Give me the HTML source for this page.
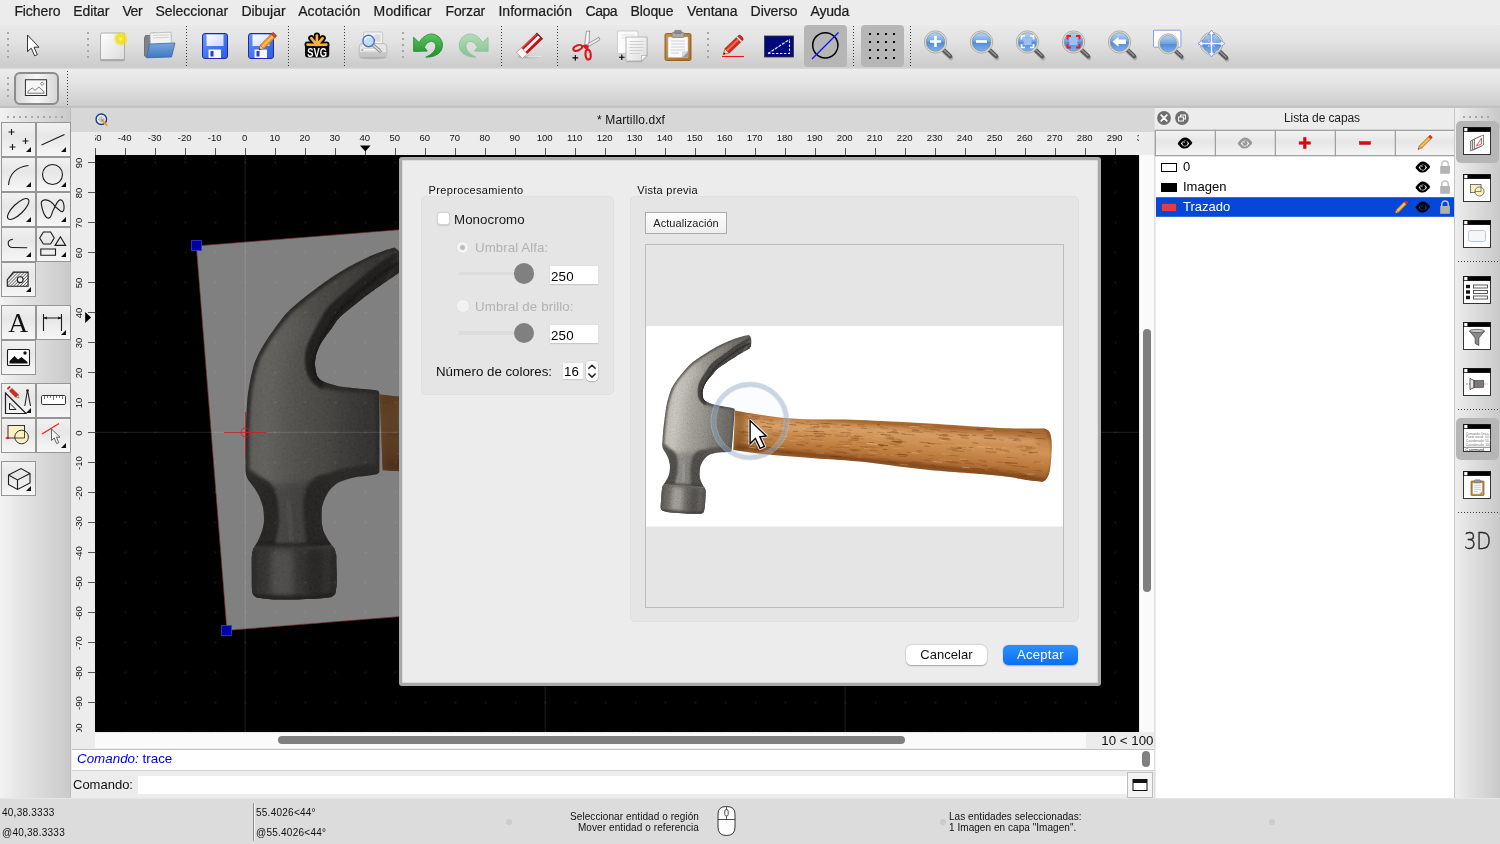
<!DOCTYPE html>
<html lang="es">
<head>
<meta charset="utf-8">
<title>Martillo.dxf</title>
<style>
*{box-sizing:border-box;margin:0;padding:0}
html,body{width:1500px;height:844px;overflow:hidden;background:#ececec;font-family:"Liberation Sans",sans-serif;color:#000}
.abs{position:absolute}
#root{position:absolute;left:0;top:0;width:1500px;height:844px;overflow:hidden;will-change:transform}
#menubar{left:0;top:0;width:1500px;height:24px;background:#ececec}
#menubar span{position:absolute;top:2px;font-size:14px;line-height:18px;color:#1c1c1c;white-space:nowrap;-webkit-text-stroke:0.22px #1c1c1c}
#tb1{left:0;top:24px;width:1500px;height:45px;background:linear-gradient(#f4f4f4 0px,#e9e9e9 1px,#e2e2e2 18px,#cbcbcb 43px,#d6d6d6 44px,#dadada 45px)}
#tb2{left:0;top:69px;width:1500px;height:39px;background:linear-gradient(#ececec 0px,#e4e4e4 14px,#cecece 36px,#c8c8c8 37px,#b9b9b9 38px,#c4c4c4 39px)}
.vsep{position:absolute;width:1px;background:repeating-linear-gradient(#3a3a3a 0,#3a3a3a 1px,transparent 1px,transparent 3px)}
.grip{position:absolute;width:2px;background:repeating-linear-gradient(#a6a6a6 0,#a6a6a6 2px,transparent 2px,transparent 6px)}
.hgrip{position:absolute;height:2px;background:repeating-linear-gradient(90deg,#a6a6a6 0,#a6a6a6 2px,transparent 2px,transparent 6px)}
#lefttb{left:0;top:108px;width:71px;height:690px;background:linear-gradient(90deg,#f2f2f2 0%,#e4e4e4 30%,#cacaca 98%,#b4b4b4 100%)}
.lb{position:absolute;width:33px;height:33px;box-shadow:0 0 0 1px #969696;background:linear-gradient(#f1f1f1 0%,#e7e7e7 40%,#f0f0f0 75%,#f6f6f6 100%)}
.lb svg{position:absolute;left:0;top:0}
.lb:after{content:"";position:absolute;right:3.9px;bottom:3.6px;border-left:5.3px solid transparent;border-bottom:5.3px solid #111}
.lb.na:after{display:none}
</style>
</head>
<body>
<div id="root">
<svg width="0" height="0" style="position:absolute"><defs>
<linearGradient id="hFace" gradientUnits="userSpaceOnUse" x1="16" y1="0" x2="92" y2="8"><stop offset="0" stop-color="#908d86"/><stop offset="0.1" stop-color="#b4b1a9"/><stop offset="0.3" stop-color="#c6c3bb"/><stop offset="0.52" stop-color="#a29f97"/><stop offset="0.76" stop-color="#85827b"/><stop offset="1" stop-color="#68655f"/></linearGradient>
<linearGradient id="hWood" gradientUnits="userSpaceOnUse" x1="240" y1="96" x2="236" y2="140"><stop offset="0" stop-color="#b0723a"/><stop offset="0.12" stop-color="#c6864a"/><stop offset="0.38" stop-color="#d09456"/><stop offset="0.7" stop-color="#bc7a3c"/><stop offset="1" stop-color="#965a28"/></linearGradient>
<filter id="hNoise" x="0" y="0" width="100%" height="100%"><feTurbulence type="fractalNoise" baseFrequency="0.8" numOctaves="2" seed="4" result="n"/><feColorMatrix in="n" type="matrix" values="1.4 0 0 0 -0.25  1.4 0 0 0 -0.25  1.4 0 0 0 -0.25  0 0 0 0 0.12"/></filter>
<filter id="hb05" x="-20%" y="-20%" width="140%" height="140%"><feGaussianBlur stdDeviation="0.45"/></filter>
<filter id="hb07" x="-20%" y="-20%" width="140%" height="140%"><feGaussianBlur stdDeviation="0.8"/></filter>
<filter id="hb1" x="-20%" y="-20%" width="140%" height="140%"><feGaussianBlur stdDeviation="1.1"/></filter>
<filter id="hb2" x="-20%" y="-20%" width="140%" height="140%"><feGaussianBlur stdDeviation="2"/></filter>
<filter id="hb4" x="-30%" y="-30%" width="160%" height="160%"><feGaussianBlur stdDeviation="3.5"/></filter>
<clipPath id="hHeadClip"><path d="M102.7 9.0 C101.8 9.2 99.3 9.6 97.1 10.2 C94.9 10.8 92.0 11.6 89.5 12.5 C86.9 13.5 84.3 14.5 81.8 15.6 C79.2 16.7 76.7 17.8 74.1 19.1 C71.5 20.4 69.8 21.3 66.4 23.3 C62.9 25.4 57.3 28.9 53.7 31.3 C50.0 33.8 47.2 35.8 44.6 38.0 C42.0 40.3 40.2 42.6 38.1 44.9 C36.1 47.3 34.1 49.5 32.2 52.2 C30.2 54.8 27.9 58.2 26.5 60.8 C25.0 63.4 24.6 65.0 23.7 67.6 C22.8 70.3 21.7 74.3 21.1 76.8 C20.5 79.4 20.3 80.6 19.9 83.0 C19.6 85.4 19.1 88.7 18.8 91.1 C18.5 93.5 18.3 95.2 18.0 97.4 C17.7 99.7 17.5 101.9 17.2 104.5 C17.0 107.1 16.7 110.6 16.6 113.0 C16.4 115.4 16.3 117.9 16.2 118.8 C16.3 119.5 16.3 121.1 16.9 122.6 C17.5 124.1 19.1 126.1 20.0 127.7 C20.9 129.3 21.7 130.8 22.3 132.3 C22.8 133.8 23.1 135.2 23.4 136.5 C23.7 137.7 23.9 138.0 23.9 139.6 C24.0 141.2 23.9 144.2 23.6 146.1 C23.3 148.0 22.7 149.4 22.1 151.0 C21.4 152.5 20.5 154.2 19.7 155.6 C18.9 156.9 17.6 158.5 17.2 159.1 C17.0 159.5 16.4 161.0 16.2 162.0 C16.0 163.0 16.0 163.2 15.8 165.1 C15.6 166.9 15.4 170.2 15.2 172.8 C15.0 175.5 14.7 179.1 14.7 180.9 C14.7 182.7 15.0 182.9 15.5 183.5 C15.9 184.2 17.0 184.7 17.4 184.9 C18.7 185.1 21.6 186.0 25.4 186.4 C29.2 186.8 35.5 187.2 40.2 187.4 C44.8 187.7 50.4 187.8 53.1 187.7 C55.7 187.7 55.4 187.5 56.1 187.2 C56.9 186.9 57.4 186.1 57.7 185.9 C57.9 185.0 58.6 182.8 58.8 180.7 C59.1 178.7 59.2 175.8 59.3 173.7 C59.4 171.7 59.5 169.9 59.6 168.5 C59.7 167.2 59.8 166.4 59.7 165.4 C59.6 164.4 59.1 162.9 59.0 162.4 C58.6 161.7 57.3 160.0 56.5 158.5 C55.8 157.0 54.8 155.2 54.3 153.5 C53.8 151.9 53.7 150.4 53.6 148.5 C53.6 146.6 53.9 143.6 54.1 142.0 C54.3 140.4 54.6 139.8 54.9 139.0 C55.2 138.1 55.4 137.7 55.8 136.9 C56.2 136.2 56.4 135.6 57.1 134.7 C57.8 133.7 58.8 132.2 60.0 131.2 C61.1 130.2 62.3 129.2 63.9 128.5 C65.5 127.8 67.7 127.3 69.6 126.9 C71.5 126.6 73.0 126.5 75.2 126.3 C77.4 126.1 81.0 126.1 82.6 125.9 C84.2 125.8 84.3 125.6 84.8 125.4 C85.3 125.1 85.5 124.5 85.6 124.4 C85.9 120.8 86.8 109.6 87.3 103.0 C87.9 96.3 88.5 87.4 88.8 84.3 C88.7 84.1 88.7 83.3 88.5 82.9 C88.2 82.6 88.2 82.5 87.2 82.2 C86.2 81.9 84.5 81.7 82.5 81.3 C80.5 81.0 77.6 80.5 75.1 80.1 C72.7 79.6 70.3 79.3 67.8 78.6 C65.4 77.8 62.3 76.6 60.7 75.8 C59.0 75.0 58.5 74.3 57.9 73.5 C57.2 72.7 57.1 72.0 56.9 70.8 C56.7 69.6 56.6 67.6 56.6 66.2 C56.7 64.8 57.0 63.7 57.3 62.5 C57.6 61.3 58.0 60.3 58.7 59.0 C59.3 57.6 60.0 56.3 61.4 54.5 C62.7 52.7 65.1 50.2 66.8 48.3 C68.5 46.3 69.2 44.8 71.5 42.8 C73.9 40.8 77.8 38.3 80.9 36.2 C84.0 34.1 88.1 31.5 90.3 30.2 C92.4 28.8 92.2 29.0 93.8 28.1 C95.3 27.2 97.9 25.8 99.6 24.8 C101.3 23.9 103.2 22.7 103.9 22.3 C104.0 21.9 104.7 21.1 104.9 20.1 C105.1 19.1 105.2 17.7 105.3 16.5 C105.3 15.3 105.3 14.0 105.2 13.0 C105.1 12.0 104.5 11.0 104.4 10.6 Z"/></clipPath>
<clipPath id="hHandleClip"><path d="M88.9 84.6 C91.8 85.1 98.6 86.5 106.0 87.6 C113.4 88.7 123.0 90.4 133.4 91.4 C143.8 92.4 154.8 93.0 168.2 93.4 C181.6 93.8 195.6 93.3 214.0 94.0 C232.4 94.7 255.5 96.0 278.7 97.3 C301.9 98.6 335.6 101.2 353.3 102.0 C371.0 102.8 377.5 102.3 385.0 102.4 C392.5 102.5 396.2 102.6 398.5 102.6 C399.3 103.2 402.3 103.8 403.5 106.0 C404.7 108.2 405.3 111.7 405.6 116.0 C405.9 120.3 405.6 127.0 405.2 132.0 C404.8 137.0 404.4 142.4 403.5 146.0 C402.6 149.6 401.2 151.9 400.0 153.5 C398.8 155.1 397.1 155.4 396.5 155.8 C393.8 155.5 387.2 155.0 380.0 154.0 C372.8 153.0 370.2 151.5 353.3 149.8 C336.4 148.1 301.9 146.0 278.7 143.6 C255.5 141.2 232.4 137.5 214.0 135.6 C195.6 133.7 184.1 133.4 168.2 132.2 C152.3 131.0 132.0 129.6 118.5 128.2 C105.0 126.8 92.5 124.7 87.3 124.0 Z"/></clipPath>
<g id="hammer">
 <rect x="0" y="0" width="417" height="200.5" fill="#fff"/>
 <path d="M88.9 84.6 C91.8 85.1 98.6 86.5 106.0 87.6 C113.4 88.7 123.0 90.4 133.4 91.4 C143.8 92.4 154.8 93.0 168.2 93.4 C181.6 93.8 195.6 93.3 214.0 94.0 C232.4 94.7 255.5 96.0 278.7 97.3 C301.9 98.6 335.6 101.2 353.3 102.0 C371.0 102.8 377.5 102.3 385.0 102.4 C392.5 102.5 396.2 102.6 398.5 102.6 C399.3 103.2 402.3 103.8 403.5 106.0 C404.7 108.2 405.3 111.7 405.6 116.0 C405.9 120.3 405.6 127.0 405.2 132.0 C404.8 137.0 404.4 142.4 403.5 146.0 C402.6 149.6 401.2 151.9 400.0 153.5 C398.8 155.1 397.1 155.4 396.5 155.8 C393.8 155.5 387.2 155.0 380.0 154.0 C372.8 153.0 370.2 151.5 353.3 149.8 C336.4 148.1 301.9 146.0 278.7 143.6 C255.5 141.2 232.4 137.5 214.0 135.6 C195.6 133.7 184.1 133.4 168.2 132.2 C152.3 131.0 132.0 129.6 118.5 128.2 C105.0 126.8 92.5 124.7 87.3 124.0 Z" fill="url(#hWood)"/>
 <g clip-path="url(#hHandleClip)">
  <path d="M88 84 L99 86 L99 128 L87 125 Z" fill="#4a240a" fill-opacity="0.35" filter="url(#hb2)"/>
  <path d="M90 86.6 L214 96 L353 104 L398 104" stroke="#8a4614" stroke-opacity="0.45" stroke-width="2.5" fill="none" filter="url(#hb1)"/>
  <path d="M90 121 L214 133.5 L353 147.5 L398 154" stroke="#6e3410" stroke-opacity="0.55" stroke-width="4" fill="none" filter="url(#hb1)"/>
  <path d="M110 98 L214 104 L300 110 L390 116" stroke="#e6b888" stroke-opacity="0.45" stroke-width="6" fill="none" filter="url(#hb2)"/>
  <path d="M188.4 101.1 l9.5 0.2" stroke="#8a5020" stroke-opacity="0.33" stroke-width="0.8"/><path d="M366.6 114.3 l3.9 0.1" stroke="#7a441c" stroke-opacity="0.45" stroke-width="0.7"/><path d="M341.4 108.9 l5.2 0.4" stroke="#6e3a14" stroke-opacity="0.52" stroke-width="0.7"/><path d="M386.8 107.2 l11.6 0.7" stroke="#7a441c" stroke-opacity="0.40" stroke-width="0.8"/><path d="M260.3 126.2 l4.0 0.3" stroke="#7a441c" stroke-opacity="0.50" stroke-width="0.8"/><path d="M109.1 92.1 l5.1 0.8" stroke="#7a441c" stroke-opacity="0.54" stroke-width="0.7"/><path d="M370.7 121.1 l5.5 0.2" stroke="#7a441c" stroke-opacity="0.36" stroke-width="0.7"/><path d="M240.5 111.0 l7.5 0.4" stroke="#6e3a14" stroke-opacity="0.51" stroke-width="0.7"/><path d="M320.2 108.7 l7.9 0.3" stroke="#e8bc88" stroke-opacity="0.31" stroke-width="0.8"/><path d="M329.9 137.8 l6.4 0.5" stroke="#7a441c" stroke-opacity="0.42" stroke-width="0.7"/><path d="M345.4 144.4 l7.7 0.7" stroke="#6e3a14" stroke-opacity="0.53" stroke-width="0.7"/><path d="M265.7 126.7 l7.5 0.6" stroke="#e8bc88" stroke-opacity="0.55" stroke-width="1.0"/><path d="M198.1 118.2 l7.9 0.1" stroke="#643010" stroke-opacity="0.38" stroke-width="0.6"/><path d="M208.8 128.4 l3.8 0.1" stroke="#8a5020" stroke-opacity="0.46" stroke-width="0.6"/><path d="M220.9 117.3 l10.1 1.1" stroke="#e8bc88" stroke-opacity="0.65" stroke-width="1.0"/><path d="M135.9 99.5 l5.3 0.6" stroke="#7a441c" stroke-opacity="0.38" stroke-width="0.6"/><path d="M175.7 100.6 l8.3 0.6" stroke="#643010" stroke-opacity="0.51" stroke-width="0.8"/><path d="M246.7 122.3 l9.8 1.0" stroke="#e8bc88" stroke-opacity="0.32" stroke-width="0.7"/><path d="M211.3 99.9 l9.3 1.0" stroke="#6e3a14" stroke-opacity="0.32" stroke-width="0.7"/><path d="M123.4 112.8 l4.0 0.2" stroke="#8a5020" stroke-opacity="0.50" stroke-width="0.7"/><path d="M97.8 119.0 l9.1 1.7" stroke="#643010" stroke-opacity="0.35" stroke-width="0.8"/><path d="M234.1 101.7 l7.9 0.7" stroke="#7a441c" stroke-opacity="0.64" stroke-width="0.5"/><path d="M121.1 103.6 l5.6 0.6" stroke="#7a441c" stroke-opacity="0.59" stroke-width="0.6"/><path d="M379.4 121.7 l9.9 0.5" stroke="#8a5020" stroke-opacity="0.62" stroke-width="0.8"/><path d="M117.7 120.7 l8.2 1.1" stroke="#643010" stroke-opacity="0.62" stroke-width="0.8"/><path d="M326.8 116.7 l5.2 0.6" stroke="#7a441c" stroke-opacity="0.58" stroke-width="0.9"/><path d="M314.9 111.5 l8.2 0.9" stroke="#6e3a14" stroke-opacity="0.42" stroke-width="0.9"/><path d="M233.6 104.6 l9.1 1.1" stroke="#e8bc88" stroke-opacity="0.42" stroke-width="1.0"/><path d="M200.8 104.0 l5.3 0.2" stroke="#7a441c" stroke-opacity="0.37" stroke-width="1.0"/><path d="M275.5 99.5 l12.1 0.7" stroke="#e8bc88" stroke-opacity="0.42" stroke-width="0.8"/><path d="M366.6 139.7 l10.5 0.9" stroke="#7a441c" stroke-opacity="0.47" stroke-width="0.8"/><path d="M116.4 124.1 l10.2 1.4" stroke="#e8bc88" stroke-opacity="0.46" stroke-width="0.9"/><path d="M141.7 98.2 l4.5 0.1" stroke="#e8bc88" stroke-opacity="0.62" stroke-width="0.9"/><path d="M388.0 136.1 l6.5 0.1" stroke="#7a441c" stroke-opacity="0.49" stroke-width="0.9"/><path d="M310.8 106.0 l10.5 1.0" stroke="#7a441c" stroke-opacity="0.35" stroke-width="0.6"/><path d="M166.6 105.5 l5.4 0.3" stroke="#643010" stroke-opacity="0.51" stroke-width="0.9"/><path d="M108.5 115.8 l12.0 1.6" stroke="#8a5020" stroke-opacity="0.53" stroke-width="1.0"/><path d="M242.5 118.5 l8.2 0.9" stroke="#7a441c" stroke-opacity="0.31" stroke-width="0.8"/><path d="M325.9 109.0 l4.4 0.4" stroke="#6e3a14" stroke-opacity="0.52" stroke-width="0.7"/><path d="M247.6 119.9 l10.8 0.7" stroke="#8a5020" stroke-opacity="0.34" stroke-width="0.6"/><path d="M102.8 92.4 l7.5 1.0" stroke="#6e3a14" stroke-opacity="0.31" stroke-width="0.8"/><path d="M243.7 117.9 l9.9 1.1" stroke="#8a5020" stroke-opacity="0.46" stroke-width="0.8"/><path d="M165.3 113.4 l11.8 0.8" stroke="#8a5020" stroke-opacity="0.62" stroke-width="0.6"/><path d="M226.0 112.7 l6.9 0.4" stroke="#e8bc88" stroke-opacity="0.41" stroke-width="0.5"/><path d="M293.5 133.4 l12.0 1.0" stroke="#e8bc88" stroke-opacity="0.35" stroke-width="0.7"/><path d="M166.9 100.1 l7.7 0.3" stroke="#6e3a14" stroke-opacity="0.56" stroke-width="0.7"/><path d="M390.9 144.6 l4.6 0.1" stroke="#8a5020" stroke-opacity="0.45" stroke-width="0.7"/><path d="M198.4 99.2 l6.7 0.3" stroke="#7a441c" stroke-opacity="0.42" stroke-width="0.5"/><path d="M190.8 118.3 l8.1 0.6" stroke="#7a441c" stroke-opacity="0.32" stroke-width="0.6"/><path d="M170.7 96.8 l10.8 0.7" stroke="#7a441c" stroke-opacity="0.39" stroke-width="0.9"/><path d="M295.5 140.4 l7.1 0.6" stroke="#8a5020" stroke-opacity="0.49" stroke-width="0.9"/><path d="M117.2 93.1 l9.9 1.0" stroke="#6e3a14" stroke-opacity="0.45" stroke-width="0.5"/><path d="M116.9 100.2 l9.1 1.3" stroke="#643010" stroke-opacity="0.38" stroke-width="0.7"/><path d="M193.1 115.8 l12.3 0.3" stroke="#7a441c" stroke-opacity="0.39" stroke-width="0.9"/><path d="M375.2 149.3 l5.6 0.5" stroke="#643010" stroke-opacity="0.36" stroke-width="0.8"/><path d="M152.6 109.8 l9.7 1.0" stroke="#6e3a14" stroke-opacity="0.39" stroke-width="0.5"/><path d="M95.6 105.6 l12.8 2.2" stroke="#7a441c" stroke-opacity="0.48" stroke-width="0.6"/><path d="M339.0 122.0 l8.0 0.9" stroke="#7a441c" stroke-opacity="0.59" stroke-width="0.7"/><path d="M155.4 102.5 l5.0 0.4" stroke="#e8bc88" stroke-opacity="0.61" stroke-width="0.7"/><path d="M195.7 97.8 l4.3 0.4" stroke="#e8bc88" stroke-opacity="0.32" stroke-width="0.7"/><path d="M106.8 113.0 l6.8 1.0" stroke="#643010" stroke-opacity="0.48" stroke-width="0.8"/><path d="M103.8 95.7 l5.7 1.1" stroke="#643010" stroke-opacity="0.30" stroke-width="1.0"/><path d="M256.3 108.2 l12.7 0.9" stroke="#643010" stroke-opacity="0.41" stroke-width="0.7"/><path d="M115.5 100.6 l9.6 0.9" stroke="#6e3a14" stroke-opacity="0.39" stroke-width="0.9"/><path d="M133.7 113.4 l6.9 0.3" stroke="#e8bc88" stroke-opacity="0.40" stroke-width="0.8"/><path d="M250.9 128.0 l9.6 0.8" stroke="#8a5020" stroke-opacity="0.55" stroke-width="0.7"/><path d="M389.4 112.2 l10.2 0.7" stroke="#6e3a14" stroke-opacity="0.53" stroke-width="0.9"/><path d="M245.9 114.8 l10.0 1.0" stroke="#8a5020" stroke-opacity="0.48" stroke-width="0.8"/><path d="M337.1 104.0 l9.9 0.8" stroke="#e8bc88" stroke-opacity="0.58" stroke-width="0.8"/><path d="M159.9 95.9 l4.3 0.2" stroke="#6e3a14" stroke-opacity="0.43" stroke-width="0.7"/><path d="M105.4 90.1 l8.3 0.8" stroke="#643010" stroke-opacity="0.39" stroke-width="0.9"/><path d="M317.5 123.4 l8.4 0.8" stroke="#6e3a14" stroke-opacity="0.53" stroke-width="0.7"/><path d="M336.0 139.4 l5.3 0.5" stroke="#7a441c" stroke-opacity="0.56" stroke-width="1.0"/><path d="M240.2 112.5 l7.8 0.8" stroke="#6e3a14" stroke-opacity="0.54" stroke-width="0.8"/><path d="M113.6 95.8 l5.5 0.8" stroke="#643010" stroke-opacity="0.56" stroke-width="0.6"/><path d="M236.7 116.2 l12.7 1.2" stroke="#7a441c" stroke-opacity="0.33" stroke-width="0.6"/><path d="M247.0 116.3 l7.7 0.5" stroke="#8a5020" stroke-opacity="0.34" stroke-width="1.0"/><path d="M374.6 105.6 l7.6 0.9" stroke="#7a441c" stroke-opacity="0.59" stroke-width="0.7"/><path d="M368.6 146.6 l3.7 0.3" stroke="#e8bc88" stroke-opacity="0.33" stroke-width="1.0"/><path d="M130.3 121.1 l8.1 0.6" stroke="#e8bc88" stroke-opacity="0.61" stroke-width="0.7"/><path d="M356.3 121.6 l4.6 0.4" stroke="#e8bc88" stroke-opacity="0.63" stroke-width="0.7"/><path d="M132.8 105.0 l6.2 0.3" stroke="#6e3a14" stroke-opacity="0.59" stroke-width="0.7"/><path d="M211.1 131.1 l5.0 0.2" stroke="#e8bc88" stroke-opacity="0.30" stroke-width="0.7"/><path d="M209.4 133.2 l8.9 0.8" stroke="#7a441c" stroke-opacity="0.43" stroke-width="0.9"/><path d="M175.3 97.3 l9.6 0.3" stroke="#7a441c" stroke-opacity="0.52" stroke-width="0.6"/><path d="M245.3 105.3 l6.7 0.8" stroke="#6e3a14" stroke-opacity="0.63" stroke-width="0.8"/><path d="M367.7 146.9 l8.5 1.0" stroke="#6e3a14" stroke-opacity="0.55" stroke-width="0.7"/><path d="M276.9 105.3 l11.7 0.7" stroke="#8a5020" stroke-opacity="0.47" stroke-width="0.7"/><path d="M194.5 106.6 l10.4 0.4" stroke="#643010" stroke-opacity="0.64" stroke-width="0.6"/><path d="M236.9 123.4 l4.2 0.2" stroke="#6e3a14" stroke-opacity="0.53" stroke-width="1.0"/><path d="M241.1 106.2 l12.1 1.0" stroke="#7a441c" stroke-opacity="0.65" stroke-width="0.8"/><path d="M164.2 101.2 l8.6 0.3" stroke="#643010" stroke-opacity="0.41" stroke-width="0.8"/><path d="M359.7 137.4 l7.1 0.4" stroke="#8a5020" stroke-opacity="0.44" stroke-width="0.6"/><path d="M318.6 123.3 l8.7 0.6" stroke="#e8bc88" stroke-opacity="0.43" stroke-width="0.8"/><path d="M352.3 113.6 l5.7 0.6" stroke="#7a441c" stroke-opacity="0.39" stroke-width="0.7"/><path d="M184.9 124.8 l12.7 0.7" stroke="#7a441c" stroke-opacity="0.34" stroke-width="0.9"/><path d="M233.9 119.9 l3.0 0.5" stroke="#8a5020" stroke-opacity="0.44" stroke-width="1.0"/><path d="M165.5 99.0 l4.5 -0.0" stroke="#e8bc88" stroke-opacity="0.48" stroke-width="0.9"/><path d="M303.1 136.8 l11.9 0.6" stroke="#6e3a14" stroke-opacity="0.33" stroke-width="0.6"/><path d="M263.1 100.3 l10.2 0.7" stroke="#e8bc88" stroke-opacity="0.64" stroke-width="0.8"/><path d="M302.4 105.9 l3.7 0.1" stroke="#8a5020" stroke-opacity="0.48" stroke-width="0.6"/><path d="M330.3 103.0 l8.4 0.9" stroke="#643010" stroke-opacity="0.65" stroke-width="0.8"/><path d="M358.7 125.3 l5.3 0.6" stroke="#7a441c" stroke-opacity="0.39" stroke-width="0.7"/><path d="M96.6 105.5 l9.7 1.3" stroke="#643010" stroke-opacity="0.45" stroke-width="0.7"/><path d="M202.5 114.0 l10.0 0.5" stroke="#643010" stroke-opacity="0.55" stroke-width="0.6"/><path d="M332.3 134.6 l8.0 0.5" stroke="#7a441c" stroke-opacity="0.37" stroke-width="0.9"/><path d="M160.2 102.6 l10.6 0.7" stroke="#8a5020" stroke-opacity="0.40" stroke-width="0.6"/><path d="M157.9 109.2 l9.7 0.9" stroke="#7a441c" stroke-opacity="0.63" stroke-width="0.5"/><path d="M97.2 109.1 l7.2 1.0" stroke="#7a441c" stroke-opacity="0.55" stroke-width="0.9"/><path d="M358.6 136.5 l13.0 0.9" stroke="#643010" stroke-opacity="0.63" stroke-width="0.8"/><path d="M249.5 116.6 l6.1 0.8" stroke="#643010" stroke-opacity="0.55" stroke-width="0.7"/><path d="M123.1 94.6 l3.8 0.5" stroke="#6e3a14" stroke-opacity="0.45" stroke-width="0.9"/><path d="M205.6 124.4 l6.1 0.0" stroke="#6e3a14" stroke-opacity="0.58" stroke-width="0.7"/><path d="M203.3 129.8 l4.9 -0.1" stroke="#7a441c" stroke-opacity="0.43" stroke-width="0.7"/><path d="M336.8 136.1 l3.4 0.4" stroke="#6e3a14" stroke-opacity="0.31" stroke-width="0.5"/><path d="M149.3 96.4 l9.1 0.9" stroke="#643010" stroke-opacity="0.43" stroke-width="0.8"/><path d="M169.7 120.4 l6.2 0.4" stroke="#6e3a14" stroke-opacity="0.40" stroke-width="0.8"/><path d="M334.9 143.6 l3.7 0.3" stroke="#6e3a14" stroke-opacity="0.59" stroke-width="1.0"/><path d="M380.0 122.9 l5.5 0.1" stroke="#7a441c" stroke-opacity="0.45" stroke-width="0.7"/><path d="M92.6 120.3 l6.0 1.0" stroke="#7a441c" stroke-opacity="0.54" stroke-width="0.7"/><path d="M187.1 108.7 l10.8 0.4" stroke="#7a441c" stroke-opacity="0.33" stroke-width="0.6"/><path d="M214.0 120.4 l7.8 1.0" stroke="#7a441c" stroke-opacity="0.49" stroke-width="0.9"/><path d="M390.3 117.7 l3.8 0.4" stroke="#7a441c" stroke-opacity="0.33" stroke-width="1.0"/><path d="M142.7 98.4 l7.6 0.7" stroke="#7a441c" stroke-opacity="0.61" stroke-width="0.9"/><path d="M292.0 105.5 l11.4 0.7" stroke="#8a5020" stroke-opacity="0.40" stroke-width="0.6"/><path d="M169.1 110.7 l4.9 0.4" stroke="#643010" stroke-opacity="0.38" stroke-width="0.8"/><path d="M189.2 110.0 l12.9 0.7" stroke="#7a441c" stroke-opacity="0.48" stroke-width="0.6"/><path d="M231.0 98.4 l3.0 0.5" stroke="#7a441c" stroke-opacity="0.61" stroke-width="1.0"/><path d="M102.3 99.2 l4.2 0.4" stroke="#8a5020" stroke-opacity="0.37" stroke-width="0.5"/><path d="M245.9 104.8 l9.0 1.1" stroke="#e8bc88" stroke-opacity="0.57" stroke-width="0.6"/><path d="M271.2 124.7 l5.2 0.2" stroke="#7a441c" stroke-opacity="0.43" stroke-width="1.0"/><path d="M101.6 114.6 l12.1 1.7" stroke="#643010" stroke-opacity="0.59" stroke-width="0.7"/><path d="M278.8 102.9 l3.3 -0.0" stroke="#7a441c" stroke-opacity="0.47" stroke-width="0.6"/><path d="M210.2 116.5 l9.4 0.6" stroke="#7a441c" stroke-opacity="0.33" stroke-width="0.6"/><path d="M390.4 136.8 l7.2 0.3" stroke="#e8bc88" stroke-opacity="0.32" stroke-width="0.7"/><path d="M216.6 128.7 l13.0 1.1" stroke="#7a441c" stroke-opacity="0.43" stroke-width="0.7"/><path d="M376.4 124.8 l4.6 0.3" stroke="#6e3a14" stroke-opacity="0.34" stroke-width="0.9"/><path d="M230.1 103.2 l3.1 0.5" stroke="#e8bc88" stroke-opacity="0.49" stroke-width="0.7"/><path d="M264.2 136.6 l10.4 0.8" stroke="#643010" stroke-opacity="0.36" stroke-width="0.8"/><path d="M371.4 109.7 l7.9 0.5" stroke="#7a441c" stroke-opacity="0.58" stroke-width="0.9"/><path d="M103.2 121.1 l6.1 0.8" stroke="#e8bc88" stroke-opacity="0.51" stroke-width="1.0"/><path d="M278.6 134.0 l4.6 0.4" stroke="#7a441c" stroke-opacity="0.58" stroke-width="0.8"/><path d="M149.6 110.6 l8.7 0.4" stroke="#8a5020" stroke-opacity="0.31" stroke-width="0.7"/><path d="M135.4 126.7 l11.2 1.0" stroke="#8a5020" stroke-opacity="0.37" stroke-width="0.8"/><path d="M293.0 114.1 l6.9 0.7" stroke="#e8bc88" stroke-opacity="0.46" stroke-width="0.8"/><path d="M183.7 104.5 l6.9 0.3" stroke="#8a5020" stroke-opacity="0.43" stroke-width="0.5"/><path d="M278.1 120.0 l5.4 0.6" stroke="#7a441c" stroke-opacity="0.57" stroke-width="0.9"/><path d="M211.7 98.5 l6.6 0.5" stroke="#7a441c" stroke-opacity="0.43" stroke-width="0.8"/><path d="M102.4 93.5 l12.2 1.8" stroke="#e8bc88" stroke-opacity="0.41" stroke-width="0.5"/><path d="M243.2 112.5 l12.5 1.4" stroke="#6e3a14" stroke-opacity="0.35" stroke-width="0.9"/><path d="M337.8 111.7 l12.8 1.0" stroke="#7a441c" stroke-opacity="0.47" stroke-width="0.9"/><path d="M157.2 123.6 l9.1 0.9" stroke="#643010" stroke-opacity="0.39" stroke-width="0.6"/><path d="M338.0 109.5 l8.0 0.6" stroke="#7a441c" stroke-opacity="0.62" stroke-width="0.8"/><path d="M162.2 107.9 l5.0 0.6" stroke="#e8bc88" stroke-opacity="0.44" stroke-width="0.8"/><path d="M362.2 112.0 l10.8 0.7" stroke="#8a5020" stroke-opacity="0.34" stroke-width="0.9"/><path d="M383.7 126.2 l8.2 0.4" stroke="#6e3a14" stroke-opacity="0.54" stroke-width="0.8"/><path d="M350.4 135.9 l6.7 0.6" stroke="#643010" stroke-opacity="0.43" stroke-width="0.7"/><path d="M322.5 121.2 l4.8 0.2" stroke="#6e3a14" stroke-opacity="0.56" stroke-width="0.8"/><path d="M184.3 130.2 l11.7 0.7" stroke="#643010" stroke-opacity="0.62" stroke-width="0.9"/><path d="M157.4 104.8 l9.3 0.9" stroke="#643010" stroke-opacity="0.45" stroke-width="0.6"/><path d="M159.1 117.5 l3.2 0.1" stroke="#643010" stroke-opacity="0.30" stroke-width="0.8"/><path d="M252.4 114.7 l6.0 0.6" stroke="#643010" stroke-opacity="0.35" stroke-width="0.7"/><path d="M131.0 125.1 l5.4 0.2" stroke="#6e3a14" stroke-opacity="0.35" stroke-width="0.6"/><path d="M292.3 111.8 l11.1 0.9" stroke="#6e3a14" stroke-opacity="0.64" stroke-width="0.8"/><path d="M196.5 119.3 l7.4 0.3" stroke="#e8bc88" stroke-opacity="0.63" stroke-width="0.6"/><path d="M90.1 89.0 l3.3 0.2" stroke="#7a441c" stroke-opacity="0.36" stroke-width="0.9"/><path d="M93.8 107.0 l12.4 1.9" stroke="#7a441c" stroke-opacity="0.35" stroke-width="0.8"/><path d="M286.9 117.5 l9.1 0.5" stroke="#6e3a14" stroke-opacity="0.48" stroke-width="0.5"/><path d="M360.4 138.9 l10.2 1.0" stroke="#7a441c" stroke-opacity="0.30" stroke-width="0.7"/><path d="M315.5 121.1 l5.3 0.5" stroke="#7a441c" stroke-opacity="0.34" stroke-width="0.6"/><path d="M360.9 145.3 l12.4 0.9" stroke="#6e3a14" stroke-opacity="0.39" stroke-width="0.8"/><path d="M222.6 126.5 l8.2 1.0" stroke="#e8bc88" stroke-opacity="0.39" stroke-width="0.9"/><path d="M116.0 108.7 l4.7 0.4" stroke="#e8bc88" stroke-opacity="0.62" stroke-width="0.6"/><path d="M368.1 113.3 l6.9 0.8" stroke="#7a441c" stroke-opacity="0.51" stroke-width="0.8"/><path d="M300.6 129.0 l12.8 1.1" stroke="#8a5020" stroke-opacity="0.46" stroke-width="0.9"/><path d="M222.9 124.1 l8.7 0.7" stroke="#7a441c" stroke-opacity="0.41" stroke-width="0.8"/><path d="M261.8 105.7 l3.3 0.5" stroke="#8a5020" stroke-opacity="0.34" stroke-width="0.7"/><path d="M133.1 94.2 l3.4 -0.0" stroke="#e8bc88" stroke-opacity="0.54" stroke-width="0.5"/><path d="M104.2 119.3 l10.6 1.7" stroke="#8a5020" stroke-opacity="0.37" stroke-width="0.5"/><path d="M353.8 143.8 l12.4 0.9" stroke="#7a441c" stroke-opacity="0.34" stroke-width="0.5"/><path d="M378.6 147.1 l10.5 0.8" stroke="#e8bc88" stroke-opacity="0.33" stroke-width="0.7"/><path d="M130.3 120.1 l9.5 0.7" stroke="#643010" stroke-opacity="0.40" stroke-width="0.5"/><path d="M168.0 105.2 l10.2 0.6" stroke="#643010" stroke-opacity="0.43" stroke-width="0.8"/><path d="M234.7 108.4 l10.5 0.9" stroke="#6e3a14" stroke-opacity="0.58" stroke-width="0.9"/><path d="M195.4 121.4 l8.4 0.4" stroke="#6e3a14" stroke-opacity="0.38" stroke-width="0.6"/><path d="M222.6 116.4 l5.9 0.2" stroke="#6e3a14" stroke-opacity="0.56" stroke-width="0.7"/><path d="M239.4 128.6 l4.8 0.7" stroke="#643010" stroke-opacity="0.47" stroke-width="0.8"/><path d="M265.7 105.4 l11.2 1.0" stroke="#7a441c" stroke-opacity="0.63" stroke-width="0.6"/><path d="M283.5 103.3 l10.9 0.9" stroke="#6e3a14" stroke-opacity="0.54" stroke-width="0.7"/><path d="M212.0 110.8 l11.9 0.6" stroke="#e8bc88" stroke-opacity="0.33" stroke-width="0.6"/><path d="M170.0 126.9 l8.0 0.2" stroke="#e8bc88" stroke-opacity="0.43" stroke-width="0.7"/><path d="M251.6 128.2 l10.5 1.0" stroke="#643010" stroke-opacity="0.53" stroke-width="0.8"/><path d="M353.9 123.8 l8.5 0.7" stroke="#7a441c" stroke-opacity="0.41" stroke-width="0.9"/><path d="M266.1 104.1 l7.6 0.7" stroke="#7a441c" stroke-opacity="0.61" stroke-width="0.6"/><path d="M319.4 137.3 l9.2 0.8" stroke="#7a441c" stroke-opacity="0.55" stroke-width="0.8"/><path d="M196.0 104.4 l12.6 0.8" stroke="#e8bc88" stroke-opacity="0.39" stroke-width="0.6"/><path d="M290.0 108.5 l4.5 0.5" stroke="#643010" stroke-opacity="0.35" stroke-width="0.7"/><path d="M149.6 116.3 l4.1 0.3" stroke="#7a441c" stroke-opacity="0.37" stroke-width="0.5"/><path d="M349.7 122.9 l5.2 0.4" stroke="#643010" stroke-opacity="0.64" stroke-width="0.6"/><path d="M273.5 116.1 l10.4 1.0" stroke="#7a441c" stroke-opacity="0.62" stroke-width="0.8"/><path d="M286.7 135.5 l9.7 0.8" stroke="#e8bc88" stroke-opacity="0.53" stroke-width="0.9"/><path d="M296.6 127.7 l7.5 0.7" stroke="#e8bc88" stroke-opacity="0.41" stroke-width="0.9"/><path d="M163.7 109.0 l10.1 0.5" stroke="#7a441c" stroke-opacity="0.35" stroke-width="0.5"/><path d="M351.0 126.5 l9.6 0.7" stroke="#e8bc88" stroke-opacity="0.61" stroke-width="0.5"/><path d="M342.9 142.6 l4.1 0.1" stroke="#7a441c" stroke-opacity="0.39" stroke-width="0.9"/><path d="M375.9 128.7 l4.0 0.1" stroke="#8a5020" stroke-opacity="0.50" stroke-width="0.7"/><path d="M94.9 115.7 l6.7 1.3" stroke="#e8bc88" stroke-opacity="0.42" stroke-width="0.6"/><path d="M298.0 117.3 l10.6 0.7" stroke="#8a5020" stroke-opacity="0.34" stroke-width="0.5"/><path d="M173.4 109.5 l3.1 0.2" stroke="#7a441c" stroke-opacity="0.45" stroke-width="0.8"/><path d="M266.4 103.4 l6.0 0.8" stroke="#8a5020" stroke-opacity="0.44" stroke-width="1.0"/><path d="M382.1 126.5 l4.6 0.5" stroke="#6e3a14" stroke-opacity="0.63" stroke-width="0.8"/><path d="M232.6 118.8 l5.3 0.6" stroke="#643010" stroke-opacity="0.64" stroke-width="0.9"/><path d="M331.8 120.6 l13.0 0.7" stroke="#e8bc88" stroke-opacity="0.57" stroke-width="0.9"/><path d="M197.8 126.9 l5.7 0.5" stroke="#643010" stroke-opacity="0.43" stroke-width="0.8"/><path d="M236.4 128.6 l11.0 0.8" stroke="#e8bc88" stroke-opacity="0.43" stroke-width="0.7"/><path d="M220.3 120.5 l9.6 1.1" stroke="#643010" stroke-opacity="0.43" stroke-width="0.5"/><path d="M341.7 142.4 l10.8 0.9" stroke="#643010" stroke-opacity="0.35" stroke-width="0.5"/><path d="M93.5 121.2 l9.6 1.5" stroke="#6e3a14" stroke-opacity="0.39" stroke-width="0.9"/><path d="M146.4 109.6 l10.8 0.9" stroke="#7a441c" stroke-opacity="0.37" stroke-width="0.6"/><path d="M360.9 131.3 l10.8 1.1" stroke="#8a5020" stroke-opacity="0.53" stroke-width="0.9"/><path d="M150.0 118.2 l8.3 0.7" stroke="#7a441c" stroke-opacity="0.56" stroke-width="0.6"/><path d="M126.0 106.8 l11.3 0.9" stroke="#8a5020" stroke-opacity="0.47" stroke-width="0.7"/><path d="M133.9 110.1 l8.0 0.3" stroke="#e8bc88" stroke-opacity="0.49" stroke-width="0.9"/><path d="M232.3 118.8 l9.7 0.8" stroke="#643010" stroke-opacity="0.59" stroke-width="1.0"/><path d="M295.5 108.3 l6.6 0.5" stroke="#6e3a14" stroke-opacity="0.53" stroke-width="0.8"/><path d="M373.2 119.9 l12.8 1.1" stroke="#7a441c" stroke-opacity="0.48" stroke-width="0.6"/><path d="M154.9 109.0 l4.3 0.2" stroke="#e8bc88" stroke-opacity="0.33" stroke-width="0.7"/><path d="M249.8 128.7 l5.1 0.3" stroke="#7a441c" stroke-opacity="0.45" stroke-width="0.5"/><path d="M177.9 108.1 l7.9 0.6" stroke="#643010" stroke-opacity="0.42" stroke-width="0.7"/><path d="M151.9 111.4 l4.2 0.2" stroke="#e8bc88" stroke-opacity="0.37" stroke-width="0.8"/><path d="M283.0 132.6 l3.4 0.3" stroke="#7a441c" stroke-opacity="0.55" stroke-width="0.5"/><path d="M181.3 95.8 l4.9 0.4" stroke="#8a5020" stroke-opacity="0.62" stroke-width="0.5"/><path d="M242.3 119.0 l6.8 0.7" stroke="#e8bc88" stroke-opacity="0.35" stroke-width="0.8"/><path d="M297.0 109.7 l9.7 0.5" stroke="#7a441c" stroke-opacity="0.46" stroke-width="0.6"/><path d="M101.2 116.0 l12.1 2.0" stroke="#643010" stroke-opacity="0.53" stroke-width="0.6"/><path d="M184.0 121.0 l11.6 0.4" stroke="#6e3a14" stroke-opacity="0.36" stroke-width="0.7"/><path d="M285.1 139.0 l3.5 0.5" stroke="#6e3a14" stroke-opacity="0.50" stroke-width="0.9"/><path d="M218.0 122.5 l7.0 0.5" stroke="#e8bc88" stroke-opacity="0.32" stroke-width="0.8"/><path d="M375.1 149.8 l7.8 0.3" stroke="#6e3a14" stroke-opacity="0.44" stroke-width="0.7"/><path d="M362.3 132.3 l7.3 0.4" stroke="#e8bc88" stroke-opacity="0.30" stroke-width="1.0"/><path d="M116.8 121.5 l4.3 0.5" stroke="#e8bc88" stroke-opacity="0.31" stroke-width="0.7"/><path d="M316.2 141.1 l6.7 0.7" stroke="#e8bc88" stroke-opacity="0.56" stroke-width="0.9"/><path d="M115.6 112.9 l10.1 1.4" stroke="#643010" stroke-opacity="0.46" stroke-width="0.5"/><path d="M99.7 90.6 l11.8 1.5" stroke="#8a5020" stroke-opacity="0.54" stroke-width="0.7"/><path d="M311.8 108.7 l11.6 0.7" stroke="#6e3a14" stroke-opacity="0.47" stroke-width="1.0"/><path d="M311.2 121.6 l4.7 0.3" stroke="#6e3a14" stroke-opacity="0.64" stroke-width="0.8"/><path d="M281.4 117.2 l6.9 0.7" stroke="#643010" stroke-opacity="0.58" stroke-width="0.8"/><path d="M178.9 97.7 l12.7 0.5" stroke="#8a5020" stroke-opacity="0.55" stroke-width="0.8"/><path d="M387.1 144.2 l9.0 0.8" stroke="#7a441c" stroke-opacity="0.41" stroke-width="0.6"/><path d="M207.8 109.9 l10.7 0.5" stroke="#7a441c" stroke-opacity="0.38" stroke-width="0.5"/><path d="M170.0 110.2 l8.9 0.3" stroke="#6e3a14" stroke-opacity="0.59" stroke-width="0.6"/><path d="M360.7 148.2 l4.5 0.5" stroke="#8a5020" stroke-opacity="0.64" stroke-width="1.0"/><path d="M195.4 98.9 l8.5 0.5" stroke="#7a441c" stroke-opacity="0.58" stroke-width="0.9"/><path d="M388.6 119.7 l3.6 0.0" stroke="#e8bc88" stroke-opacity="0.44" stroke-width="0.6"/><path d="M318.3 135.7 l7.6 0.7" stroke="#643010" stroke-opacity="0.33" stroke-width="0.6"/><path d="M266.2 135.6 l11.9 1.0" stroke="#7a441c" stroke-opacity="0.48" stroke-width="0.6"/><path d="M154.7 97.7 l11.1 0.8" stroke="#8a5020" stroke-opacity="0.40" stroke-width="0.7"/><path d="M247.2 103.8 l3.4 0.5" stroke="#643010" stroke-opacity="0.65" stroke-width="0.7"/><path d="M230.9 100.2 l6.2 0.5" stroke="#643010" stroke-opacity="0.31" stroke-width="0.5"/><path d="M100.2 123.4 l11.7 1.5" stroke="#8a5020" stroke-opacity="0.47" stroke-width="1.0"/><path d="M175.1 98.9 l7.5 0.6" stroke="#8a5020" stroke-opacity="0.51" stroke-width="0.6"/><path d="M101.5 95.8 l4.8 0.4" stroke="#6e3a14" stroke-opacity="0.33" stroke-width="0.7"/><path d="M304.5 121.8 l11.5 0.9" stroke="#8a5020" stroke-opacity="0.61" stroke-width="1.0"/><path d="M304.7 105.1 l6.2 0.7" stroke="#6e3a14" stroke-opacity="0.38" stroke-width="0.8"/><path d="M209.5 112.7 l4.6 0.1" stroke="#e8bc88" stroke-opacity="0.64" stroke-width="0.5"/><path d="M167.8 107.6 l12.0 0.4" stroke="#6e3a14" stroke-opacity="0.62" stroke-width="0.8"/><path d="M314.8 134.2 l7.8 0.7" stroke="#643010" stroke-opacity="0.34" stroke-width="1.0"/><path d="M295.8 113.3 l8.9 0.6" stroke="#6e3a14" stroke-opacity="0.57" stroke-width="0.7"/><path d="M208.6 109.9 l6.8 0.7" stroke="#7a441c" stroke-opacity="0.45" stroke-width="0.9"/><path d="M232.2 132.3 l11.0 0.7" stroke="#7a441c" stroke-opacity="0.35" stroke-width="0.8"/><path d="M203.4 123.5 l10.8 0.7" stroke="#7a441c" stroke-opacity="0.64" stroke-width="0.8"/><path d="M227.5 109.8 l11.2 0.9" stroke="#e8bc88" stroke-opacity="0.47" stroke-width="0.7"/><path d="M313.8 109.5 l7.5 0.8" stroke="#7a441c" stroke-opacity="0.61" stroke-width="0.6"/><path d="M215.2 102.0 l5.7 0.7" stroke="#643010" stroke-opacity="0.59" stroke-width="0.6"/><path d="M123.2 107.8 l7.8 0.6" stroke="#8a5020" stroke-opacity="0.35" stroke-width="0.9"/><path d="M293.2 109.4 l7.8 0.7" stroke="#643010" stroke-opacity="0.40" stroke-width="1.0"/><path d="M221.3 106.4 l5.4 0.3" stroke="#7a441c" stroke-opacity="0.38" stroke-width="0.9"/><path d="M107.5 115.2 l5.9 0.8" stroke="#6e3a14" stroke-opacity="0.64" stroke-width="0.8"/><path d="M245.3 115.3 l10.9 0.8" stroke="#643010" stroke-opacity="0.63" stroke-width="0.7"/><path d="M367.2 114.5 l8.7 0.8" stroke="#7a441c" stroke-opacity="0.35" stroke-width="0.6"/><path d="M143.4 114.6 l11.3 0.8" stroke="#e8bc88" stroke-opacity="0.61" stroke-width="0.6"/><path d="M152.6 115.6 l10.1 0.6" stroke="#8a5020" stroke-opacity="0.58" stroke-width="0.5"/><path d="M300.4 122.9 l11.4 1.0" stroke="#8a5020" stroke-opacity="0.62" stroke-width="0.7"/><path d="M345.9 141.0 l7.9 0.4" stroke="#7a441c" stroke-opacity="0.31" stroke-width="0.8"/><path d="M165.5 114.8 l12.9 0.6" stroke="#e8bc88" stroke-opacity="0.31" stroke-width="0.8"/><path d="M91.4 105.5 l7.5 1.1" stroke="#6e3a14" stroke-opacity="0.48" stroke-width="0.6"/><path d="M342.3 142.8 l10.8 0.9" stroke="#8a5020" stroke-opacity="0.60" stroke-width="0.5"/><path d="M355.3 145.7 l7.9 0.9" stroke="#8a5020" stroke-opacity="0.48" stroke-width="0.6"/><path d="M164.0 98.2 l9.2 0.3" stroke="#643010" stroke-opacity="0.36" stroke-width="0.9"/><path d="M99.1 91.8 l10.0 1.7" stroke="#6e3a14" stroke-opacity="0.37" stroke-width="0.8"/><path d="M231.0 106.2 l7.4 0.8" stroke="#6e3a14" stroke-opacity="0.42" stroke-width="0.5"/><path d="M127.4 109.5 l8.0 0.5" stroke="#6e3a14" stroke-opacity="0.40" stroke-width="0.9"/><path d="M254.6 107.4 l5.3 0.6" stroke="#7a441c" stroke-opacity="0.53" stroke-width="0.6"/><path d="M341.1 143.7 l6.9 0.5" stroke="#8a5020" stroke-opacity="0.45" stroke-width="0.7"/><path d="M376.2 140.6 l6.4 0.6" stroke="#643010" stroke-opacity="0.38" stroke-width="0.9"/><path d="M261.6 138.7 l6.2 0.3" stroke="#8a5020" stroke-opacity="0.44" stroke-width="0.8"/><path d="M381.2 148.5 l5.5 0.0" stroke="#e8bc88" stroke-opacity="0.45" stroke-width="0.6"/><path d="M147.0 105.3 l5.0 0.1" stroke="#7a441c" stroke-opacity="0.53" stroke-width="1.0"/><path d="M326.1 142.5 l9.3 0.4" stroke="#6e3a14" stroke-opacity="0.58" stroke-width="0.8"/><path d="M170.8 119.2 l5.7 0.3" stroke="#6e3a14" stroke-opacity="0.49" stroke-width="0.6"/><path d="M248.2 115.2 l12.5 1.0" stroke="#643010" stroke-opacity="0.40" stroke-width="0.6"/><path d="M108.3 123.5 l12.2 1.6" stroke="#6e3a14" stroke-opacity="0.62" stroke-width="0.8"/><path d="M135.1 97.6 l4.3 0.3" stroke="#7a441c" stroke-opacity="0.40" stroke-width="0.6"/><path d="M313.7 133.2 l5.9 0.5" stroke="#e8bc88" stroke-opacity="0.46" stroke-width="0.8"/><path d="M151.2 118.9 l7.6 0.5" stroke="#8a5020" stroke-opacity="0.49" stroke-width="0.9"/><path d="M99.4 100.2 l4.9 0.7" stroke="#8a5020" stroke-opacity="0.49" stroke-width="1.0"/><path d="M139.3 126.3 l6.2 0.3" stroke="#643010" stroke-opacity="0.41" stroke-width="1.0"/><path d="M179.8 123.0 l4.6 0.2" stroke="#643010" stroke-opacity="0.32" stroke-width="0.5"/><path d="M207.9 112.3 l10.4 0.9" stroke="#7a441c" stroke-opacity="0.34" stroke-width="0.8"/><path d="M373.9 123.8 l9.7 0.8" stroke="#7a441c" stroke-opacity="0.35" stroke-width="0.9"/><path d="M339.6 125.7 l10.4 0.6" stroke="#7a441c" stroke-opacity="0.56" stroke-width="0.8"/><path d="M282.2 129.2 l7.1 0.7" stroke="#7a441c" stroke-opacity="0.34" stroke-width="0.8"/><path d="M241.4 135.3 l8.7 1.0" stroke="#643010" stroke-opacity="0.45" stroke-width="0.8"/><path d="M205.4 112.7 l7.6 0.3" stroke="#643010" stroke-opacity="0.55" stroke-width="0.8"/><path d="M271.0 125.9 l3.1 0.2" stroke="#7a441c" stroke-opacity="0.56" stroke-width="0.7"/><path d="M253.2 130.3 l7.4 0.4" stroke="#7a441c" stroke-opacity="0.43" stroke-width="1.0"/><path d="M188.5 126.1 l11.4 0.8" stroke="#7a441c" stroke-opacity="0.64" stroke-width="0.9"/><path d="M380.6 106.1 l5.6 0.6" stroke="#643010" stroke-opacity="0.61" stroke-width="0.9"/><path d="M253.7 138.2 l8.2 0.7" stroke="#e8bc88" stroke-opacity="0.48" stroke-width="0.7"/><path d="M102.4 112.7 l7.5 1.1" stroke="#6e3a14" stroke-opacity="0.30" stroke-width="0.5"/><path d="M203.8 110.7 l8.6 0.7" stroke="#7a441c" stroke-opacity="0.50" stroke-width="0.7"/><path d="M223.8 120.4 l13.0 1.3" stroke="#8a5020" stroke-opacity="0.42" stroke-width="0.5"/><path d="M200.3 109.3 l3.8 -0.1" stroke="#7a441c" stroke-opacity="0.41" stroke-width="0.9"/><path d="M299.7 135.5 l12.9 1.0" stroke="#7a441c" stroke-opacity="0.61" stroke-width="0.8"/><path d="M338.1 112.3 l11.9 0.9" stroke="#6e3a14" stroke-opacity="0.44" stroke-width="0.8"/><path d="M197.4 132.1 l9.4 0.1" stroke="#7a441c" stroke-opacity="0.31" stroke-width="0.5"/><path d="M306.0 124.7 l12.2 0.9" stroke="#6e3a14" stroke-opacity="0.44" stroke-width="0.8"/><path d="M149.8 111.5 l8.5 0.8" stroke="#e8bc88" stroke-opacity="0.39" stroke-width="0.8"/><path d="M133.7 100.1 l9.0 0.8" stroke="#8a5020" stroke-opacity="0.35" stroke-width="0.6"/><path d="M120.4 97.5 l8.2 0.9" stroke="#8a5020" stroke-opacity="0.59" stroke-width="0.9"/>
  <path d="M396 101 Q406 112 405.5 130 Q404.5 148 396 157 L410 160 L410 100 Z" fill="#7a3e12" fill-opacity="0.5" filter="url(#hb1)"/>
 </g>
 <path d="M102.7 9.0 C101.8 9.2 99.3 9.6 97.1 10.2 C94.9 10.8 92.0 11.6 89.5 12.5 C86.9 13.5 84.3 14.5 81.8 15.6 C79.2 16.7 76.7 17.8 74.1 19.1 C71.5 20.4 69.8 21.3 66.4 23.3 C62.9 25.4 57.3 28.9 53.7 31.3 C50.0 33.8 47.2 35.8 44.6 38.0 C42.0 40.3 40.2 42.6 38.1 44.9 C36.1 47.3 34.1 49.5 32.2 52.2 C30.2 54.8 27.9 58.2 26.5 60.8 C25.0 63.4 24.6 65.0 23.7 67.6 C22.8 70.3 21.7 74.3 21.1 76.8 C20.5 79.4 20.3 80.6 19.9 83.0 C19.6 85.4 19.1 88.7 18.8 91.1 C18.5 93.5 18.3 95.2 18.0 97.4 C17.7 99.7 17.5 101.9 17.2 104.5 C17.0 107.1 16.7 110.6 16.6 113.0 C16.4 115.4 16.3 117.9 16.2 118.8 C16.3 119.5 16.3 121.1 16.9 122.6 C17.5 124.1 19.1 126.1 20.0 127.7 C20.9 129.3 21.7 130.8 22.3 132.3 C22.8 133.8 23.1 135.2 23.4 136.5 C23.7 137.7 23.9 138.0 23.9 139.6 C24.0 141.2 23.9 144.2 23.6 146.1 C23.3 148.0 22.7 149.4 22.1 151.0 C21.4 152.5 20.5 154.2 19.7 155.6 C18.9 156.9 17.6 158.5 17.2 159.1 C17.0 159.5 16.4 161.0 16.2 162.0 C16.0 163.0 16.0 163.2 15.8 165.1 C15.6 166.9 15.4 170.2 15.2 172.8 C15.0 175.5 14.7 179.1 14.7 180.9 C14.7 182.7 15.0 182.9 15.5 183.5 C15.9 184.2 17.0 184.7 17.4 184.9 C18.7 185.1 21.6 186.0 25.4 186.4 C29.2 186.8 35.5 187.2 40.2 187.4 C44.8 187.7 50.4 187.8 53.1 187.7 C55.7 187.7 55.4 187.5 56.1 187.2 C56.9 186.9 57.4 186.1 57.7 185.9 C57.9 185.0 58.6 182.8 58.8 180.7 C59.1 178.7 59.2 175.8 59.3 173.7 C59.4 171.7 59.5 169.9 59.6 168.5 C59.7 167.2 59.8 166.4 59.7 165.4 C59.6 164.4 59.1 162.9 59.0 162.4 C58.6 161.7 57.3 160.0 56.5 158.5 C55.8 157.0 54.8 155.2 54.3 153.5 C53.8 151.9 53.7 150.4 53.6 148.5 C53.6 146.6 53.9 143.6 54.1 142.0 C54.3 140.4 54.6 139.8 54.9 139.0 C55.2 138.1 55.4 137.7 55.8 136.9 C56.2 136.2 56.4 135.6 57.1 134.7 C57.8 133.7 58.8 132.2 60.0 131.2 C61.1 130.2 62.3 129.2 63.9 128.5 C65.5 127.8 67.7 127.3 69.6 126.9 C71.5 126.6 73.0 126.5 75.2 126.3 C77.4 126.1 81.0 126.1 82.6 125.9 C84.2 125.8 84.3 125.6 84.8 125.4 C85.3 125.1 85.5 124.5 85.6 124.4 C85.9 120.8 86.8 109.6 87.3 103.0 C87.9 96.3 88.5 87.4 88.8 84.3 C88.7 84.1 88.7 83.3 88.5 82.9 C88.2 82.6 88.2 82.5 87.2 82.2 C86.2 81.9 84.5 81.7 82.5 81.3 C80.5 81.0 77.6 80.5 75.1 80.1 C72.7 79.6 70.3 79.3 67.8 78.6 C65.4 77.8 62.3 76.6 60.7 75.8 C59.0 75.0 58.5 74.3 57.9 73.5 C57.2 72.7 57.1 72.0 56.9 70.8 C56.7 69.6 56.6 67.6 56.6 66.2 C56.7 64.8 57.0 63.7 57.3 62.5 C57.6 61.3 58.0 60.3 58.7 59.0 C59.3 57.6 60.0 56.3 61.4 54.5 C62.7 52.7 65.1 50.2 66.8 48.3 C68.5 46.3 69.2 44.8 71.5 42.8 C73.9 40.8 77.8 38.3 80.9 36.2 C84.0 34.1 88.1 31.5 90.3 30.2 C92.4 28.8 92.2 29.0 93.8 28.1 C95.3 27.2 97.9 25.8 99.6 24.8 C101.3 23.9 103.2 22.7 103.9 22.3 C104.0 21.9 104.7 21.1 104.9 20.1 C105.1 19.1 105.2 17.7 105.3 16.5 C105.3 15.3 105.3 14.0 105.2 13.0 C105.1 12.0 104.5 11.0 104.4 10.6 Z" fill="#4b4844"/>
 <g clip-path="url(#hHeadClip)">
  <path d="M18.3 118.8 L19.6 102.8 L20.8 90.9 L21.9 83.1 L23.3 76.0 L25.7 67.8 L28.6 60.7 L34.2 52.6 L40.0 45.7 L46.5 39.0 L55.1 32.6 L67.2 25.0 L74.9 20.6 L82.4 17.0 L90.0 14.0 L97.5 11.7 L102.8 10.6 L103.6 11.8 L96.6 15.7 L88.8 20.6 L82.9 25.0 L78.2 28.4 L72.3 32.6 L65.8 37.8 L60.8 44.8 L57.4 50.1 L55.1 54.0 L53.0 58.5 L52.3 62.8 L52.2 66.8 L52.5 70.5 L54.6 74.9 L59.1 79.0 L67.4 81.0 L74.9 82.4 L82.3 83.6 L86.7 84.4 L85.6 102.8 L84.2 120.2 L79.4 120.5 L71.9 121.0 L64.4 121.9 L58.8 123.3 L53.7 124.1 L49.0 127.0 L46.5 130.9 L45.1 136.0 L44.6 141.3 L44.4 147.8 L44.6 154.6 L44.9 159.3 L28.4 158.0 L29.9 153.4 L31.5 146.7 L31.8 140.3 L31.5 133.0 L30.3 128.5 L27.7 125.0 L22.4 121.2 L19.0 118.1 Z" fill="url(#hFace)" filter="url(#hb07)"/>
  <!-- claw side band + groove -->
  <path d="M103.6 11.8 C102.5 12.4 99.1 14.2 96.6 15.7 C94.2 17.2 91.1 19.1 88.8 20.6 C86.5 22.2 84.7 23.7 82.9 25.0 C81.1 26.3 80.0 27.2 78.2 28.4 C76.4 29.7 74.4 31.0 72.3 32.6 C70.3 34.1 67.7 35.8 65.8 37.8 C63.8 39.9 62.2 42.8 60.8 44.8 C59.4 46.9 58.3 48.6 57.4 50.1 C56.4 51.7 55.8 52.6 55.1 54.0 C54.4 55.4 53.4 57.0 53.0 58.5 C52.5 60.0 52.4 61.4 52.3 62.8 C52.1 64.2 52.1 65.5 52.2 66.8 C52.2 68.1 52.1 69.1 52.5 70.5 C53.0 71.8 53.5 73.5 54.6 74.9 C55.7 76.3 58.4 78.3 59.1 79.0 L105.3 16.5 L104.9 20.1 L103.9 22.3 L99.6 24.8 L93.8 28.1 L90.3 30.2 L80.9 36.2 L71.5 42.8 L66.8 48.3 L61.4 54.5 L58.7 59.0 L57.3 62.5 L56.6 66.2 L56.9 70.8 L57.9 73.5 L60.7 75.8 L67.8 78.6 Z" fill="#383633" filter="url(#hb05)"/>
  <path d="M104.3 17.1 C102.9 17.8 98.5 19.9 96.2 21.2 C93.9 22.5 92.3 23.5 90.3 24.9 C88.4 26.2 86.4 27.7 84.4 29.2 C82.4 30.7 80.5 32.1 78.5 33.7 C76.5 35.3 74.3 36.9 72.4 38.7 C70.5 40.5 68.8 42.5 67.2 44.5 C65.7 46.5 64.2 48.7 63.1 50.4 C62.0 52.2 61.3 53.3 60.4 54.9 C59.5 56.5 58.4 58.2 57.7 59.9 C56.9 61.6 56.3 63.5 55.9 65.0 C55.6 66.5 55.6 67.8 55.8 69.2 C55.9 70.5 56.3 71.7 56.9 72.9 C57.5 74.1 59.0 75.7 59.5 76.2" stroke="#1e1d1c" stroke-opacity="0.9" stroke-width="1.6" fill="none" filter="url(#hb05)"/>
  <path d="M103.6 11.8 C102.5 12.4 99.1 14.2 96.6 15.7 C94.2 17.2 91.1 19.1 88.8 20.6 C86.5 22.2 84.7 23.7 82.9 25.0 C81.1 26.3 80.0 27.2 78.2 28.4 C76.4 29.7 74.4 31.0 72.3 32.6 C70.3 34.1 67.7 35.8 65.8 37.8 C63.8 39.9 62.2 42.8 60.8 44.8 C59.4 46.9 58.3 48.6 57.4 50.1 C56.4 51.7 55.8 52.6 55.1 54.0 C54.4 55.4 53.4 57.0 53.0 58.5 C52.5 60.0 52.4 61.4 52.3 62.8 C52.1 64.2 52.1 65.5 52.2 66.8 C52.2 68.1 52.1 69.1 52.5 70.5 C53.0 71.8 53.5 73.5 54.6 74.9 C55.7 76.3 58.4 78.3 59.1 79.0" stroke="#2c2b29" stroke-opacity="0.5" stroke-width="1" fill="none" filter="url(#hb05)"/>
  <!-- cheek soft shading -->
  <path d="M70 80 L90 84 L90 124 L66 126 Z" fill="#2e2d2b" fill-opacity="0.12" filter="url(#hb4)"/>
  <path d="M22.7 118.7 C23.4 114.4 25.4 100.6 26.9 92.9 C28.3 85.2 29.4 78.8 31.6 72.4 C33.9 66.1 36.7 60.0 40.3 54.9 C43.9 49.8 51.2 44.0 53.4 41.8" stroke="#d0cec8" stroke-opacity="0.35" stroke-width="9" fill="none" filter="url(#hb4)"/>
  <!-- neck -->
  <path d="M24.1 127.1 L59.6 126.8 L59.0 161.2 L16.4 158.3 Z" fill="#2c2a27" fill-opacity="0.3" filter="url(#hb2)"/>
  <path d="M38.1 135.5 C38.0 137.4 37.9 143.2 37.7 147.0 C37.4 150.8 36.7 156.5 36.5 158.4" stroke="#c0beb8" stroke-opacity="0.35" stroke-width="5" fill="none" filter="url(#hb2)"/>
  <!-- striking face cylinder -->
  <path d="M15.3 159.0 L61.0 162.4 L58.7 190.4 L13.1 186.7 Z" fill="#625f5a"/>
  <path d="M26.2 160.4 L37.6 161.3 L36.2 185.4 L24.0 184.5 Z" fill="#a8a59d" fill-opacity="0.85" filter="url(#hb2)"/>
  <path d="M44.9 161.6 L53.7 162.3 L52.0 187.2 L42.9 186.8 Z" fill="#3a3936" fill-opacity="0.7" filter="url(#hb2)"/>
  <path d="M15.3 159.0 L19.0 159.3 L16.9 186.0 L13.2 185.7 Z" fill="#3a3936" fill-opacity="0.5" filter="url(#hb1)"/>
  <path d="M56.8 162.3 L60.9 162.6 L58.8 189.3 L54.7 189.0 Z" fill="#2e2d2b" fill-opacity="0.55" filter="url(#hb1)"/>
  <path d="M17.5 158.3 C19.7 158.5 26.1 159.2 30.9 159.6 C35.8 160.0 41.8 160.4 46.5 160.7 C51.2 161.0 56.9 161.2 59.0 161.3" stroke="#8e8c87" stroke-opacity="0.8" stroke-width="0.9" fill="none" filter="url(#hb05)"/>
  <path d="M16.6 156.5 C19.0 156.8 26.1 157.7 31.1 158.2 C36.1 158.7 41.9 159.0 46.6 159.3 C51.4 159.6 57.4 159.8 59.6 159.9" stroke="#2a2927" stroke-opacity="0.65" stroke-width="1.8" fill="none" filter="url(#hb07)"/>
  <path d="M14.9 184.0 C17.2 184.3 23.9 185.4 28.9 185.9 C33.8 186.4 39.6 186.9 44.4 187.0 C49.2 187.2 55.3 186.7 57.5 186.6" stroke="#1e1d1c" stroke-opacity="0.7" stroke-width="2.4" fill="none" filter="url(#hb07)"/>
  <rect x="10" y="5" width="100" height="190" filter="url(#hNoise)"/>
 </g>
</g>
</defs></svg>
<div id="menubar" class="abs">
<span style="left:14.4px;letter-spacing:-0.10px">Fichero</span>
<span style="left:73.2px;letter-spacing:-0.06px">Editar</span>
<span style="left:122.4px;letter-spacing:-0.34px">Ver</span>
<span style="left:155.6px;letter-spacing:-0.07px">Seleccionar</span>
<span style="left:241.4px;letter-spacing:-0.02px">Dibujar</span>
<span style="left:298.2px;letter-spacing:0.08px">Acotación</span>
<span style="left:373.6px;letter-spacing:0.13px">Modificar</span>
<span style="left:445.6px;letter-spacing:-0.17px">Forzar</span>
<span style="left:498.4px;letter-spacing:0.04px">Información</span>
<span style="left:585.6px;letter-spacing:-0.47px">Capa</span>
<span style="left:630.6px;letter-spacing:-0.13px">Bloque</span>
<span style="left:687.0px;letter-spacing:-0.14px">Ventana</span>
<span style="left:750.6px;letter-spacing:-0.07px">Diverso</span>
<span style="left:810.6px;letter-spacing:-0.21px">Ayuda</span>
</div>
<svg width="0" height="0" style="position:absolute">
<defs>
<linearGradient id="gPage" x1="0" y1="0" x2="1" y2="1"><stop offset="0" stop-color="#ffffff"/><stop offset="1" stop-color="#dcdcdc"/></linearGradient>
<radialGradient id="gGlow"><stop offset="0" stop-color="#fffbc0"/><stop offset="0.25" stop-color="#f6e620"/><stop offset="0.6" stop-color="#f0de18" stop-opacity="0.85"/><stop offset="1" stop-color="#f0de18" stop-opacity="0"/></radialGradient>
<linearGradient id="gFolder" x1="0" y1="0" x2="0" y2="1"><stop offset="0" stop-color="#79a7df"/><stop offset="1" stop-color="#3f76c0"/></linearGradient>
<linearGradient id="gFloppy" x1="0" y1="0" x2="1" y2="1"><stop offset="0" stop-color="#6a98fa"/><stop offset="0.5" stop-color="#4478f2"/><stop offset="1" stop-color="#2f5be4"/></linearGradient>
<linearGradient id="gLabel" x1="0" y1="0" x2="1" y2="1"><stop offset="0" stop-color="#ffffff"/><stop offset="1" stop-color="#c9d6f6"/></linearGradient>
<radialGradient id="gLens" cx="0.5" cy="0.3" r="0.7"><stop offset="0" stop-color="#9cc4f2"/><stop offset="0.6" stop-color="#5b94dc"/><stop offset="1" stop-color="#4a84d0"/></radialGradient>
<linearGradient id="gLensTop" x1="0" y1="0" x2="0" y2="1"><stop offset="0" stop-color="#b8d6f8"/><stop offset="0.5" stop-color="#6aa0e2"/><stop offset="0.5" stop-color="#4f8ad6"/><stop offset="1" stop-color="#7eb0ea"/></linearGradient>
<linearGradient id="gUndo" x1="0" y1="0" x2="0" y2="1"><stop offset="0" stop-color="#5cc45c"/><stop offset="1" stop-color="#1f8f2f"/></linearGradient>
<linearGradient id="gRedo" x1="0" y1="0" x2="0" y2="1"><stop offset="0" stop-color="#b4dcb8"/><stop offset="1" stop-color="#86c092"/></linearGradient>
<linearGradient id="gClip" x1="0" y1="0" x2="1" y2="1"><stop offset="0" stop-color="#c8924a"/><stop offset="1" stop-color="#a86e2a"/></linearGradient>
<linearGradient id="gBtn" x1="0" y1="0" x2="0" y2="1"><stop offset="0" stop-color="#f7f7f7"/><stop offset="1" stop-color="#dddddd"/></linearGradient>
<g id="mag">
  <path d="M20.5 20.5 L28.5 28" stroke="#00000030" stroke-width="4.5" stroke-linecap="round" transform="translate(0.6,1)"/>
  <path d="M21.2 20.6 L28.2 27.2" stroke="#585858" stroke-width="4.2" stroke-linecap="round"/>
  <path d="M22 21 L28 26.6" stroke="#9a9a9a" stroke-width="1.2" stroke-linecap="round"/>
  <circle cx="13.5" cy="13" r="11.2" fill="#dcdcd4" stroke="#a4a49c" stroke-width="0.8"/>
  <circle cx="13.5" cy="13" r="9.3" fill="url(#gLensTop)" stroke="#7a8aa0" stroke-width="0.6"/>
</g>
</defs>
</svg>
<div id="tb1" class="abs">
<div class="grip" style="left:7px;top:8px;height:26px"></div>
<div class="grip" style="left:87px;top:8px;height:26px"></div>
<div class="vsep" style="left:186px;top:2px;height:40px"></div>
<div class="vsep" style="left:288px;top:2px;height:40px"></div>
<div class="vsep" style="left:344px;top:2px;height:40px"></div>
<div class="grip" style="left:402px;top:8px;height:26px"></div>
<div class="vsep" style="left:501px;top:2px;height:40px"></div>
<div class="vsep" style="left:557px;top:2px;height:40px"></div>
<div class="grip" style="left:707px;top:8px;height:26px"></div>
<div class="vsep" style="left:853px;top:2px;height:40px"></div>
<div class="vsep" style="left:910px;top:2px;height:40px"></div>
<div class="abs" style="left:804px;top:1px;width:43px;height:42px;background:#b6b6b6;border-radius:4px"></div>
<div class="abs" style="left:861px;top:1px;width:43px;height:42px;background:#b6b6b6;border-radius:4px"></div>
<svg class="abs" style="left:0;top:-24px" width="1500" height="70" viewBox="0 0 1500 70">
<!-- pointer -->
<path d="M27.5 35 L27.5 51.6 L31.3 48.2 L34.6 55.8 L37.3 54.6 L34 47.2 L39 47.2 Z" fill="#fff" stroke="#2a2a2a" stroke-width="0.95" stroke-linejoin="round"/>
<!-- new -->
<g transform="translate(97,30)">
 <rect x="3.2" y="4.2" width="24.6" height="27" rx="1.5" fill="#00000030"/>
 <rect x="3.5" y="3" width="24" height="26.5" rx="1.5" fill="url(#gPage)" stroke="#a8a8a8" stroke-width="0.9"/>
 <circle cx="23.8" cy="8.8" r="7.6" fill="url(#gGlow)"/>
</g>
<!-- open -->
<g transform="translate(143,29)">
 <path d="M1.5 9 L1.5 27 L4 28 L26 27 L28 6 L10 4 L8.5 6.5 L2.5 6.5 Z" fill="#7e8288" stroke="#60646a" stroke-width="0.8"/>
 <path d="M7 4 L28 3.2 L28.5 20 L7.5 22 Z" fill="#f2f2f2" stroke="#b0b0b0" stroke-width="0.7"/>
 <path d="M10 6.5 L26 5.8 M10 9 L26 8.3" stroke="#c8c8c8" stroke-width="0.8"/>
 <path d="M6.5 15 L32 14 L28.5 28 L3.5 28.8 Z" fill="url(#gFolder)" stroke="#3567ae" stroke-width="0.8" stroke-linejoin="round"/>
</g>
<!-- save -->
<g transform="translate(199,29)">
 <rect x="3.5" y="4.5" width="25" height="25" rx="2.5" fill="url(#gFloppy)" stroke="#2226a8" stroke-width="1"/>
 <rect x="7.5" y="5.5" width="17" height="11.5" fill="url(#gLabel)"/>
 <rect x="9.5" y="20.5" width="12.5" height="8.5" fill="#f4f6ff"/>
 <rect x="11.5" y="22" width="3" height="5.5" fill="#2342c8"/>
</g>
<!-- save as -->
<g transform="translate(245,29)">
 <rect x="3.5" y="4.5" width="25" height="25" rx="2.5" fill="url(#gFloppy)" stroke="#2226a8" stroke-width="1"/>
 <rect x="7.5" y="5.5" width="17" height="11.5" fill="url(#gLabel)"/>
 <rect x="9.5" y="20.5" width="12.5" height="8.5" fill="#f4f6ff"/>
 <rect x="11.5" y="22" width="3" height="5.5" fill="#2342c8"/>
 <g transform="translate(14,21) rotate(-45)">
  <path d="M0 0 L4.5 -2.6 L4.5 2.6 Z" fill="#e8c9a0" stroke="#8a4a18" stroke-width="0.5"/>
  <path d="M0 0 L1.8 -1 L1.8 1 Z" fill="#402010"/>
  <rect x="4.5" y="-2.6" width="15.5" height="5.2" fill="#f59a1e" stroke="#b85a10" stroke-width="0.6"/>
  <rect x="4.5" y="-0.9" width="15.5" height="1.8" fill="#ffc060"/>
  <rect x="20" y="-2.6" width="2.6" height="5.2" rx="0.8" fill="#e04030" stroke="#a02018" stroke-width="0.5"/>
 </g>
</g>
<!-- svg -->
<g transform="translate(301,29)">
 <path d="M15.9 16 L15.9 6.6 M15.9 16 L10.3 9.2 M15.9 16 L21.7 9.2 M15.9 16 L6.6 15.6 M15.9 16 L25.4 15.6" stroke="#0a0a0a" stroke-width="6.2" stroke-linecap="round" fill="none"/>
 <rect x="4" y="14.6" width="24.2" height="14" rx="3" fill="#0a0a0a"/>
 <path d="M15.9 16 L15.9 6.6 M15.9 16 L10.3 9.2 M15.9 16 L21.7 9.2 M15.9 16 L6.6 15.6 M15.9 16 L25.4 15.6" stroke="#fbb03b" stroke-width="2.7" stroke-linecap="round" fill="none"/>
 <rect x="4.6" y="17.4" width="23" height="10.6" rx="2" fill="#0a0a0a"/>
 <text x="16.1" y="27.6" font-family="Liberation Sans, sans-serif" font-weight="bold" font-size="13.2" text-anchor="middle" fill="#fff" textLength="19.6" lengthAdjust="spacingAndGlyphs">SVG</text>
</g>
<!-- print preview -->
<g transform="translate(357,29)">
 <ellipse cx="16" cy="28.6" rx="13.5" ry="1.6" fill="#00000028"/>
 <rect x="6.5" y="3" width="19" height="13" rx="1" fill="#f2f2f2" stroke="#bcbcbc" stroke-width="0.8"/>
 <rect x="17.5" y="5.5" width="6" height="7" fill="#dadada"/>
 <path d="M2.2 17.8 Q2.2 14.6 5.4 14.6 L26.6 14.6 Q29.8 14.6 29.8 17.8 L29.8 25.6 Q29.8 27.8 27.6 27.8 L4.4 27.8 Q2.2 27.8 2.2 25.6 Z" fill="#e6e6e6" stroke="#acacac" stroke-width="0.8"/>
 <rect x="2.6" y="23.2" width="26.8" height="4.2" fill="#c6c6c6"/>
 <rect x="6" y="19.4" width="20" height="2.6" rx="1" fill="#f8f8f8" stroke="#b8b8b8" stroke-width="0.5"/>
 <circle cx="5.2" cy="21" r="0.7" fill="#777"/>
 <path d="M15.8 16 L23 22" stroke="#8c8c8c" stroke-width="3.4" stroke-linecap="round"/>
 <path d="M15.8 16 L23 22" stroke="#dedede" stroke-width="1.6" stroke-linecap="round"/>
 <circle cx="11.6" cy="12" r="5.7" fill="#c4dcf6" stroke="#4674c8" stroke-width="1.4"/>
 <path d="M7.8 11 A4 4 0 0 1 13 8.2" stroke="#f0f6ff" stroke-width="1.5" fill="none" stroke-linecap="round"/>
</g>
<!-- undo -->
<path d="M413.6 37.3 L413.6 51.4 L427.3 51.1 L424.2 47.2 Q427 41.2 431.5 41.2 Q436.2 42.5 435.8 47 Q435 53 425.8 57.2 Q437 57.5 441.5 50 Q444.5 42 438.5 36.5 Q431 30.8 423 37.5 Q420.5 39.8 419.2 42.6 Z" fill="url(#gUndo)" stroke="#168a28" stroke-width="0.8" stroke-linejoin="round"/>
<!-- redo -->
<g transform="translate(901.7,0) scale(-1,1)"><path d="M413.6 37.3 L413.6 51.4 L427.3 51.1 L424.2 47.2 Q427 41.2 431.5 41.2 Q436.2 42.5 435.8 47 Q435 53 425.8 57.2 Q437 57.5 441.5 50 Q444.5 42 438.5 36.5 Q431 30.8 423 37.5 Q420.5 39.8 419.2 42.6 Z" fill="url(#gRedo)" stroke="#86c096" stroke-width="0.8" stroke-linejoin="round"/></g>
<!-- eraser -->
<ellipse cx="529" cy="57" rx="11.5" ry="1.3" fill="#00000030"/>
<ellipse cx="534" cy="56.6" rx="8" ry="0.9" fill="#ffffffa0"/>
<g transform="translate(521.7,53.3) rotate(-44)">
 <rect x="-3.2" y="-4.3" width="28.4" height="8.6" fill="#c80c14"/>
 <rect x="3.6" y="-1.5" width="20.6" height="3" fill="#fafafa"/>
 <rect x="3.6" y="-4.3" width="20.6" height="1.4" fill="#e85a5a" fill-opacity="0.7"/>
 <rect x="-3.2" y="-4.3" width="6.8" height="8.6" fill="#f6f6f6" stroke="#9a9a9a" stroke-width="0.5"/>
 <rect x="24.2" y="-4.3" width="1.2" height="8.6" fill="#5a3a34"/>
</g>
<!-- cut -->
<g transform="translate(569,29)">
 <path d="M15.6 15.7 L17.4 2.4 L20.6 1.9 L19.9 16.3 Z" fill="#f6f6f6" stroke="#7a7a7a" stroke-width="0.7" stroke-linejoin="round"/>
 <path d="M18.8 14.7 L30 8.3 L30.9 10.9 L19.9 17.3 Z" fill="#ececec" stroke="#7a7a7a" stroke-width="0.7" stroke-linejoin="round"/>
 <ellipse cx="8.7" cy="18.9" rx="4.6" ry="2.5" transform="rotate(-24 8.7 18.9)" fill="none" stroke="#dc141c" stroke-width="2.1"/>
 <ellipse cx="19.1" cy="25.7" rx="2.6" ry="4.9" transform="rotate(-6 19.1 25.7)" fill="none" stroke="#dc141c" stroke-width="2.1"/>
 <path d="M12.6 16.6 L17.2 15.4 L19.6 17 L19.4 21.4 L16.6 20.2 Z" fill="#dc141c"/>
 <path d="M3.4 28.9 L9.2 28.9 M6.3 26 L6.3 31.8" stroke="#000" stroke-width="1.1"/>
</g>
<!-- copy -->
<g transform="translate(615,29)">
 <path d="M2.5 2 L23 2 L23 24.5 L2.5 24.5 Z" fill="#fbfbfb" stroke="#c4c4c4" stroke-width="0.8"/>
 <path d="M6 6 L20 6 M6 9 L20 9" stroke="#e0e0e0" stroke-width="0.9"/>
 <path d="M11 8 L32 8 L32 26.5 L26 32.5 L11 32.5 Z" fill="#00000020" transform="translate(0.5,0.8)"/>
 <path d="M11 8 L32 8 L32 26.5 L26.5 32 L11 32 Z" fill="url(#gPage)" stroke="#a8a8a8" stroke-width="0.8"/>
 <path d="M14.5 12.5 L28.5 12.5 M14.5 15.5 L28.5 15.5 M14.5 18.5 L28.5 18.5 M14.5 21.5 L28.5 21.5 M14.5 24.5 L25 24.5" stroke="#cfcfcf" stroke-width="1"/>
 <path d="M26.5 32 L26.5 26.5 L32 26.5 Z" fill="#f8f8f8" stroke="#a0a0a0" stroke-width="0.6"/>
 <path d="M4 28.2 L9.6 28.2 M6.8 25.4 L6.8 31" stroke="#000" stroke-width="1.1"/>
</g>
<!-- paste -->
<g transform="translate(662,29)">
 <rect x="3" y="4.5" width="26" height="27" rx="1.6" fill="url(#gClip)" stroke="#8c5a1c" stroke-width="0.9"/>
 <path d="M6 8 L26 8 L26 28.5 L6 28.5 Z" fill="#fafafa" stroke="#c0c0c0" stroke-width="0.6"/>
 <path d="M9 12 L23 12 M9 15 L23 15 M9 18 L23 18 M9 21 L23 21 M9 24 L17 24" stroke="#cfcfcf" stroke-width="1.1"/>
 <path d="M20 28.5 L26 22.5 L26 28.5 Z" fill="#9a9a9a"/>
 <path d="M20 28.5 L20.5 23 L26 22.5 Z" fill="#dcdcdc" stroke="#aaa" stroke-width="0.4"/>
 <rect x="10" y="3.5" width="12" height="5" rx="1.2" fill="#a9aaa4" stroke="#777" stroke-width="0.7"/>
 <rect x="12.5" y="1.4" width="7" height="3" rx="1" fill="#8c8d88" stroke="#6a6a6a" stroke-width="0.6"/>
</g>
<!-- pencil draw -->
<g transform="translate(717,29)">
 <path d="M5 27.5 L27 27.5" stroke="#f01010" stroke-width="1.1"/>
 <g transform="translate(6.2,25.6) rotate(-44)">
  <path d="M0 0 L5.5 -3.1 L5.5 3.1 Z" fill="#f0d0a8" stroke="#7a3a10" stroke-width="0.5"/>
  <path d="M0 0 L2.2 -1.2 L2.2 1.2 Z" fill="#301808"/>
  <rect x="5.5" y="-3.1" width="16" height="6.2" fill="#d8281c" stroke="#8a140c" stroke-width="0.6"/>
  <rect x="5.5" y="-1.4" width="16" height="2" fill="#f46a50"/>
  <rect x="21.5" y="-3.1" width="1.8" height="6.2" fill="#e8e8e8" stroke="#999" stroke-width="0.4"/>
  <path d="M23.3 -3.1 L25 -3.1 Q27 0 25 3.1 L23.3 3.1 Z" fill="#d8281c" stroke="#8a140c" stroke-width="0.5"/>
 </g>
</g>
<!-- restrict ortho (blue) -->
<g transform="translate(763,29)">
 <rect x="1.5" y="7" width="29" height="21" fill="#000a7a" stroke="#333" stroke-width="0.8"/>
 <path d="M5 24.5 L26.5 10.5" stroke="#fff" stroke-width="1.1" stroke-dasharray="3 1.2"/>
 <path d="M5 24.5 L26.5 24.5 L26.5 10.5" stroke="#e8e8ff" stroke-width="1.1" stroke-dasharray="2.4 1.6" fill="none"/>
</g>
<!-- circle / line -->
<g transform="translate(809,29)">
 <circle cx="16.3" cy="16.3" r="12.6" fill="none" stroke="#000" stroke-width="1.5"/>
 <path d="M3 30 L29.5 3.5" stroke="#1010f0" stroke-width="1.2"/>
</g>
<!-- grid -->
<g fill="#000">
<rect x="869" y="33" width="2" height="2"/>
<rect x="877" y="33" width="2" height="2"/>
<rect x="885" y="33" width="2" height="2"/>
<rect x="893" y="33" width="2" height="2"/>
<rect x="869" y="41" width="2" height="2"/>
<rect x="877" y="41" width="2" height="2"/>
<rect x="885" y="41" width="2" height="2"/>
<rect x="893" y="41" width="2" height="2"/>
<rect x="869" y="49" width="2" height="2"/>
<rect x="877" y="49" width="2" height="2"/>
<rect x="885" y="49" width="2" height="2"/>
<rect x="893" y="49" width="2" height="2"/>
<rect x="869" y="57" width="2" height="2"/>
<rect x="877" y="57" width="2" height="2"/>
<rect x="885" y="57" width="2" height="2"/>
<rect x="893" y="57" width="2" height="2"/>
</g>
<!-- zoom in -->
<g transform="translate(922,29)"><use href="#mag"/><path d="M8 12.5 L19 12.5 M13.5 7 L13.5 18" stroke="#fff" stroke-width="2.6"/></g>
<g transform="translate(968,29)"><use href="#mag"/><path d="M8 12.5 L19 12.5" stroke="#fff" stroke-width="2.6"/></g>
<g transform="translate(1014,29)"><use href="#mag"/><rect x="9.5" y="9" width="8" height="7" fill="#9ec0ee"/><path d="M7.5 10.5 L7.5 7 L11 7 M16 7 L19.5 7 L19.5 10.5 M19.5 15 L19.5 18.5 L16 18.5 M11 18.5 L7.5 18.5 L7.5 15" stroke="#fff" stroke-width="1.7" fill="none"/></g>
<g transform="translate(1060,29)"><use href="#mag"/><rect x="9.5" y="9" width="8" height="7" fill="#9ec0ee"/><path d="M7.5 10.5 L7.5 7 L11 7 M16 7 L19.5 7 L19.5 10.5 M19.5 15 L19.5 18.5 L16 18.5 M11 18.5 L7.5 18.5 L7.5 15" stroke="#f01818" stroke-width="1.9" fill="none"/></g>
<g transform="translate(1106,29)"><use href="#mag"/><path d="M6.5 12.8 L12.5 7.8 L12.5 10.6 L20 10.6 L20 15 L12.5 15 L12.5 17.8 Z" fill="#fff"/></g>
<g transform="translate(1153,28)"><rect x="0.5" y="2.2" width="27.4" height="17" rx="0.8" fill="#fdfdfd" stroke="#7a98dc" stroke-width="0.9"/><g transform="translate(3.2,4.2) scale(0.9)"><use href="#mag"/></g></g>
<g transform="translate(1198,30.5)"><use href="#mag"/><rect x="10" y="9.5" width="7" height="7" fill="#9ec0ee"/><path d="M13.5 -0.5 L16.7 4 L14.7 4 L14.7 11.8 L22.5 11.8 L22.5 9.8 L27 13 L22.5 16.2 L22.5 14.2 L14.7 14.2 L14.7 22 L16.7 22 L13.5 26.5 L10.3 22 L12.3 22 L12.3 14.2 L4.5 14.2 L4.5 16.2 L0 13 L4.5 9.8 L4.5 11.8 L12.3 11.8 L12.3 4 L10.3 4 Z" fill="#fff" stroke="#4a80d8" stroke-width="0.7"/></g>
</svg>
</div>
<div id="tb2" class="abs">
<div class="grip" style="left:7px;top:8px;height:20px"></div>
<div class="vsep" style="left:67px;top:2px;height:34px"></div>
<div class="abs" style="left:14px;top:3px;width:45px;height:33px;border:2px solid #8c8c8c;border-radius:6px;background:linear-gradient(90deg,#d6d6d6,#f8f8f8 50%,#d6d6d6)"></div>
<svg class="abs" style="left:24px;top:10px" width="24" height="18" viewBox="0 0 24 19"><rect x="0.8" y="0.8" width="22.4" height="16.6" fill="#f6f6f6" stroke="#222" stroke-width="1"/><path d="M3.5 15 L3.5 13 L8 9.5 L11 12 L15 8.5 L20.5 13.5 L20.5 15 Z" fill="none" stroke="#666" stroke-width="0.9"/><path d="M18.5 3.2 L20.3 5 L18.5 6.8 L16.7 5 Z" fill="none" stroke="#666" stroke-width="0.8"/></svg>
</div>
<div id="lefttb" class="abs">
<div class="hgrip" style="left:7px;top:8px;width:56px"></div>
<div class="lb" style="left:2.3px;top:14.8px"><svg width="33" height="33" viewBox="0 0 33 33"><path d="M9.5 6 L9.5 12 M6.5 9 L12.5 9 M23.5 15 L23.5 21 M20.5 18 L26.5 18 M10.5 21 L10.5 27 M7.5 24 L13.5 24" stroke="#1a1a1a" stroke-width="1.1" fill="none"/></svg></div>
<div class="lb" style="left:36.8px;top:14.8px"><svg width="33" height="33" viewBox="0 0 33 33"><path d="M4.5 22 L27.5 11.5" stroke="#1a1a1a" stroke-width="1.1" fill="none"/></svg></div>
<div class="lb" style="left:2.3px;top:49.8px"><svg width="33" height="33" viewBox="0 0 33 33"><path d="M6.5 27 Q8 10 26.5 7.5" stroke="#1a1a1a" stroke-width="1.1" fill="none"/></svg></div>
<div class="lb" style="left:36.8px;top:49.8px"><svg width="33" height="33" viewBox="0 0 33 33"><circle cx="15.5" cy="16.5" r="10" stroke="#1a1a1a" stroke-width="1.1" fill="none"/></svg></div>
<div class="lb" style="left:2.3px;top:84.8px"><svg width="33" height="33" viewBox="0 0 33 33"><ellipse cx="16.2" cy="16" rx="14" ry="5.2" transform="rotate(-44 16.2 16)" stroke="#1a1a1a" stroke-width="1.1" fill="none"/></svg></div>
<div class="lb" style="left:36.8px;top:84.8px"><svg width="33" height="33" viewBox="0 0 33 33"><path d="M18.1 13.4 C15 9 11 6.5 7.7 6.9 C4.5 7.4 3.8 9.5 4.4 11.4 C5 15 5.5 17 6.4 19.3 C8 23.5 10 25.3 11.6 25.1 C13.5 24.8 14.2 23 14.9 20.6 C16 17 17 15.5 18.1 13.4 C19.5 10.5 21 7.5 23 6.9 C25.5 6.5 26.6 9.5 27 12.8 C27.2 15.5 26.8 18 25.6 18.6 C24 19 23 17.8 22 16.7 C20.5 15.5 19.5 14.8 18.1 13.4 Z" stroke="#1a1a1a" stroke-width="1.1" fill="none"/></svg></div>
<div class="lb" style="left:2.3px;top:119.8px"><svg width="33" height="33" viewBox="0 0 33 33"><path d="M10.9 11.2 C7.5 11.5 6 13.5 6.2 15.5 C6.4 18 8 19.4 10.5 19.5 L25.2 19.8" stroke="#1a1a1a" stroke-width="1.1" fill="none"/></svg></div>
<div class="lb" style="left:36.8px;top:119.8px"><svg width="33" height="33" viewBox="0 0 33 33"><path d="M2.7 10 L6.4 4 L13.6 4 L17.2 10 L13.6 16 L6.4 16 Z M18.1 17.4 L23.4 8.7 L28.6 17.4 Z M3.8 21 L18.5 21 L18.5 27.2 L3.8 27.2 Z" stroke="#1a1a1a" stroke-width="1.1" fill="none"/></svg></div>
<div class="lb" style="left:2.3px;top:154.8px"><svg width="33" height="33" viewBox="0 0 33 33"><defs><pattern id="hat" width="2.2" height="2.2" patternUnits="userSpaceOnUse" patternTransform="rotate(45)"><rect width="2.2" height="2.2" fill="#f4f4f4"/><rect width="0.7" height="2.2" fill="#555"/></pattern></defs><path d="M5.3 23.2 L5.3 16.7 L11.4 9.1 L26.1 9.1 L26.1 23.2 Z" fill="url(#hat)" stroke="#1a1a1a" stroke-width="1.1"/><circle cx="18.2" cy="16.7" r="2.9" fill="#f2f2f2" stroke="#1a1a1a" stroke-width="1.1"/></svg></div>
<div class="lb na" style="left:2.3px;top:197.8px"><svg width="33" height="33" viewBox="0 0 33 33"><text x="16.2" y="25.6" font-family="Liberation Serif, serif" font-size="27.5" text-anchor="middle" fill="#111">A</text></svg></div>
<div class="lb" style="left:36.8px;top:197.8px"><svg width="33" height="33" viewBox="0 0 33 33"><path d="M6.5 8 L6.5 25 M24.5 8 L24.5 25 M6.5 12 L24.5 12" stroke="#1a1a1a" stroke-width="1.1" fill="none" stroke-width="1.3"/><path d="M6.5 12 L10 10.4 L10 13.6 Z M24.5 12 L21 10.4 L21 13.6 Z" fill="#1a1a1a"/></svg></div>
<div class="lb na" style="left:2.3px;top:232.8px"><svg width="33" height="33" viewBox="0 0 33 33"><rect x="5.5" y="8.5" width="22" height="16" rx="1" fill="#fff" stroke="#1a1a1a" stroke-width="1.1"/><path d="M7.5 22.5 L7.5 20 L12.5 15 L16 18.5 L19.5 16 L25.5 21 L25.5 22.5 Z" fill="#111"/><circle cx="23" cy="12" r="1.7" fill="#111"/></svg></div>
<div class="lb" style="left:2.3px;top:275.8px"><svg width="33" height="33" viewBox="0 0 33 33"><path d="M3.5 29.5 L3.5 9 L24 29.5 Z" fill="none" stroke="#222" stroke-width="1.2"/><path d="M7.5 25.5 L7.5 19 L14 25.5 Z" fill="none" stroke="#222" stroke-width="1"/><g transform="translate(17,14) rotate(-135)"><path d="M0 0 L3 -1.8 L3 1.8 Z" fill="#f0d0a8" stroke="#7a3a10" stroke-width="0.4"/><rect x="3" y="-1.9" width="9" height="3.8" fill="#d8281c" stroke="#8a140c" stroke-width="0.4"/><rect x="12" y="-1.9" width="1.6" height="3.8" fill="#d8d8d8"/><rect x="13.6" y="-1.9" width="1.8" height="3.8" rx="0.6" fill="#d8281c"/></g><path d="M25.5 6 L22.8 22 M25.5 6 L28.5 22" stroke="#222" stroke-width="1.1"/><circle cx="25.5" cy="6.5" r="1.3" fill="#222"/></svg></div>
<div class="lb na" style="left:36.8px;top:275.8px"><svg width="33" height="33" viewBox="0 0 33 33"><rect x="4.5" y="11.5" width="24" height="9" rx="1.2" fill="#fff" stroke="#333" stroke-width="1"/><path d="M7.5 12 L7.5 15 M10.5 12 L10.5 14 M13.5 12 L13.5 14 M16.5 12 L16.5 16 M19.5 12 L19.5 14 M22.5 12 L22.5 14 M25.5 12 L25.5 15" stroke="#555" stroke-width="0.8"/></svg></div>
<div class="lb na" style="left:2.3px;top:310.8px"><svg width="33" height="33" viewBox="0 0 33 33"><rect x="6" y="6.5" width="16.5" height="12.5" fill="#fdf0c0" stroke="#333" stroke-width="1"/><circle cx="19.6" cy="18" r="6.8" fill="#fdf0c0" stroke="#333" stroke-width="1"/><path d="M13 19 L22.5 19 L22.5 11.4" fill="none" stroke="#333" stroke-width="0.9"/><path d="M3.5 19 L7 19" stroke="#e02020" stroke-width="1"/><circle cx="5.6" cy="19" r="1.3" fill="#e02020"/></svg></div>
<div class="lb" style="left:36.8px;top:310.8px"><svg width="33" height="33" viewBox="0 0 33 33"><path d="M5 15 L22 4.5" stroke="#f02020" stroke-width="1.2"/><path d="M14.5 10 L14.5 21.5 L17.2 19 L19.6 24.6 L21.8 23.6 L19.4 18.2 L23 18.2 Z" fill="#f4f4f4" stroke="#555" stroke-width="0.9" stroke-linejoin="round"/></svg></div>
<div class="lb" style="left:2.3px;top:353.8px"><svg width="33" height="33" viewBox="0 0 33 33"><path d="M6.5 13 L19 6.5 L28 11.5 L28 21 L15.5 27.5 L6.5 22.5 Z M6.5 13 L15.5 18 L28 11.5 M15.5 18 L15.5 27.5" stroke="#1a1a1a" stroke-width="1.1" fill="none" stroke-width="1.2"/></svg></div>
</div>
<div class="abs" style="left:71px;top:108px;width:1083px;height:24px;background:#d7d7d7"></div>
<div class="abs" style="left:71px;top:107px;width:1429px;height:1px;background:#c3c3c3"></div>
<div class="abs" style="left:431px;top:112px;width:400px;text-align:center;font-size:12px;line-height:16px;color:#111;white-space:nowrap;letter-spacing:0.15px">* Martillo.dxf</div>
<svg class="abs" style="left:95px;top:112.5px" width="14" height="14" viewBox="0 0 16 16"><circle cx="7.2" cy="7.2" r="6" fill="#e8eef8" stroke="#1a3a8a" stroke-width="1.6"/><path d="M3.5 7.2 L11 7.2 M7.2 3.5 L7.2 11" stroke="#8aa" stroke-width="0.7"/><circle cx="7.2" cy="7.2" r="2.6" fill="none" stroke="#99a" stroke-width="0.6"/><path d="M8 8 L13.5 13.8" stroke="#f0a020" stroke-width="2.2" stroke-linecap="round"/><path d="M7.4 7.4 L9 8.2 L8.2 9 Z" fill="#c03020"/></svg>
<div class="abs" style="left:71px;top:132px;width:1083px;height:23px;background:#ececec"></div>
<div class="abs" id="hr" style="left:95px;top:132px;width:1043.6px;height:23px;overflow:hidden;font-size:9.5px;line-height:12px;color:#111">
<i class="abs" style="left:0px;top:16px;width:1px;height:7px;background:#555"></i><span class="abs" style="left:-20.3px;top:0px;width:40px;text-align:center;font-style:normal">-50</span>
<i class="abs" style="left:30px;top:16px;width:1px;height:7px;background:#555"></i><span class="abs" style="left:9.7px;top:0px;width:40px;text-align:center;font-style:normal">-40</span>
<i class="abs" style="left:60px;top:16px;width:1px;height:7px;background:#555"></i><span class="abs" style="left:39.7px;top:0px;width:40px;text-align:center;font-style:normal">-30</span>
<i class="abs" style="left:90px;top:16px;width:1px;height:7px;background:#555"></i><span class="abs" style="left:69.7px;top:0px;width:40px;text-align:center;font-style:normal">-20</span>
<i class="abs" style="left:120px;top:16px;width:1px;height:7px;background:#555"></i><span class="abs" style="left:99.7px;top:0px;width:40px;text-align:center;font-style:normal">-10</span>
<i class="abs" style="left:150px;top:16px;width:1px;height:7px;background:#555"></i><span class="abs" style="left:129.7px;top:0px;width:40px;text-align:center;font-style:normal">0</span>
<i class="abs" style="left:180px;top:16px;width:1px;height:7px;background:#555"></i><span class="abs" style="left:159.7px;top:0px;width:40px;text-align:center;font-style:normal">10</span>
<i class="abs" style="left:210px;top:16px;width:1px;height:7px;background:#555"></i><span class="abs" style="left:189.7px;top:0px;width:40px;text-align:center;font-style:normal">20</span>
<i class="abs" style="left:240px;top:16px;width:1px;height:7px;background:#555"></i><span class="abs" style="left:219.7px;top:0px;width:40px;text-align:center;font-style:normal">30</span>
<i class="abs" style="left:270px;top:16px;width:1px;height:7px;background:#555"></i><span class="abs" style="left:249.7px;top:0px;width:40px;text-align:center;font-style:normal">40</span>
<i class="abs" style="left:300px;top:16px;width:1px;height:7px;background:#555"></i><span class="abs" style="left:279.7px;top:0px;width:40px;text-align:center;font-style:normal">50</span>
<i class="abs" style="left:330px;top:16px;width:1px;height:7px;background:#555"></i><span class="abs" style="left:309.7px;top:0px;width:40px;text-align:center;font-style:normal">60</span>
<i class="abs" style="left:360px;top:16px;width:1px;height:7px;background:#555"></i><span class="abs" style="left:339.7px;top:0px;width:40px;text-align:center;font-style:normal">70</span>
<i class="abs" style="left:390px;top:16px;width:1px;height:7px;background:#555"></i><span class="abs" style="left:369.7px;top:0px;width:40px;text-align:center;font-style:normal">80</span>
<i class="abs" style="left:420px;top:16px;width:1px;height:7px;background:#555"></i><span class="abs" style="left:399.7px;top:0px;width:40px;text-align:center;font-style:normal">90</span>
<i class="abs" style="left:450px;top:16px;width:1px;height:7px;background:#555"></i><span class="abs" style="left:429.7px;top:0px;width:40px;text-align:center;font-style:normal">100</span>
<i class="abs" style="left:480px;top:16px;width:1px;height:7px;background:#555"></i><span class="abs" style="left:459.7px;top:0px;width:40px;text-align:center;font-style:normal">110</span>
<i class="abs" style="left:510px;top:16px;width:1px;height:7px;background:#555"></i><span class="abs" style="left:489.7px;top:0px;width:40px;text-align:center;font-style:normal">120</span>
<i class="abs" style="left:540px;top:16px;width:1px;height:7px;background:#555"></i><span class="abs" style="left:519.7px;top:0px;width:40px;text-align:center;font-style:normal">130</span>
<i class="abs" style="left:570px;top:16px;width:1px;height:7px;background:#555"></i><span class="abs" style="left:549.7px;top:0px;width:40px;text-align:center;font-style:normal">140</span>
<i class="abs" style="left:600px;top:16px;width:1px;height:7px;background:#555"></i><span class="abs" style="left:579.7px;top:0px;width:40px;text-align:center;font-style:normal">150</span>
<i class="abs" style="left:630px;top:16px;width:1px;height:7px;background:#555"></i><span class="abs" style="left:609.7px;top:0px;width:40px;text-align:center;font-style:normal">160</span>
<i class="abs" style="left:660px;top:16px;width:1px;height:7px;background:#555"></i><span class="abs" style="left:639.7px;top:0px;width:40px;text-align:center;font-style:normal">170</span>
<i class="abs" style="left:690px;top:16px;width:1px;height:7px;background:#555"></i><span class="abs" style="left:669.7px;top:0px;width:40px;text-align:center;font-style:normal">180</span>
<i class="abs" style="left:720px;top:16px;width:1px;height:7px;background:#555"></i><span class="abs" style="left:699.7px;top:0px;width:40px;text-align:center;font-style:normal">190</span>
<i class="abs" style="left:750px;top:16px;width:1px;height:7px;background:#555"></i><span class="abs" style="left:729.7px;top:0px;width:40px;text-align:center;font-style:normal">200</span>
<i class="abs" style="left:780px;top:16px;width:1px;height:7px;background:#555"></i><span class="abs" style="left:759.7px;top:0px;width:40px;text-align:center;font-style:normal">210</span>
<i class="abs" style="left:810px;top:16px;width:1px;height:7px;background:#555"></i><span class="abs" style="left:789.7px;top:0px;width:40px;text-align:center;font-style:normal">220</span>
<i class="abs" style="left:840px;top:16px;width:1px;height:7px;background:#555"></i><span class="abs" style="left:819.7px;top:0px;width:40px;text-align:center;font-style:normal">230</span>
<i class="abs" style="left:870px;top:16px;width:1px;height:7px;background:#555"></i><span class="abs" style="left:849.7px;top:0px;width:40px;text-align:center;font-style:normal">240</span>
<i class="abs" style="left:900px;top:16px;width:1px;height:7px;background:#555"></i><span class="abs" style="left:879.7px;top:0px;width:40px;text-align:center;font-style:normal">250</span>
<i class="abs" style="left:930px;top:16px;width:1px;height:7px;background:#555"></i><span class="abs" style="left:909.7px;top:0px;width:40px;text-align:center;font-style:normal">260</span>
<i class="abs" style="left:960px;top:16px;width:1px;height:7px;background:#555"></i><span class="abs" style="left:939.7px;top:0px;width:40px;text-align:center;font-style:normal">270</span>
<i class="abs" style="left:990px;top:16px;width:1px;height:7px;background:#555"></i><span class="abs" style="left:969.7px;top:0px;width:40px;text-align:center;font-style:normal">280</span>
<i class="abs" style="left:1020px;top:16px;width:1px;height:7px;background:#555"></i><span class="abs" style="left:999.7px;top:0px;width:40px;text-align:center;font-style:normal">290</span>
<i class="abs" style="left:1050px;top:16px;width:1px;height:7px;background:#555"></i><span class="abs" style="left:1029.7px;top:0px;width:40px;text-align:center;font-style:normal">300</span>
</div>
<div class="abs" style="left:71px;top:155px;width:24px;height:577px;background:#ececec"></div>
<div class="abs" id="vr" style="left:71px;top:155px;width:24px;height:577px;overflow:hidden;font-size:9.5px;line-height:12px;color:#111">
<i class="abs" style="left:17px;top:577px;width:7px;height:1px;background:#555"></i><span class="abs" style="left:-12.5px;top:571.5px;width:40px;height:12px;text-align:center;transform:rotate(-90deg)">-100</span>
<i class="abs" style="left:17px;top:547px;width:7px;height:1px;background:#555"></i><span class="abs" style="left:-12.5px;top:541.5px;width:40px;height:12px;text-align:center;transform:rotate(-90deg)">-90</span>
<i class="abs" style="left:17px;top:517px;width:7px;height:1px;background:#555"></i><span class="abs" style="left:-12.5px;top:511.5px;width:40px;height:12px;text-align:center;transform:rotate(-90deg)">-80</span>
<i class="abs" style="left:17px;top:487px;width:7px;height:1px;background:#555"></i><span class="abs" style="left:-12.5px;top:481.5px;width:40px;height:12px;text-align:center;transform:rotate(-90deg)">-70</span>
<i class="abs" style="left:17px;top:457px;width:7px;height:1px;background:#555"></i><span class="abs" style="left:-12.5px;top:451.5px;width:40px;height:12px;text-align:center;transform:rotate(-90deg)">-60</span>
<i class="abs" style="left:17px;top:427px;width:7px;height:1px;background:#555"></i><span class="abs" style="left:-12.5px;top:421.5px;width:40px;height:12px;text-align:center;transform:rotate(-90deg)">-50</span>
<i class="abs" style="left:17px;top:397px;width:7px;height:1px;background:#555"></i><span class="abs" style="left:-12.5px;top:391.5px;width:40px;height:12px;text-align:center;transform:rotate(-90deg)">-40</span>
<i class="abs" style="left:17px;top:367px;width:7px;height:1px;background:#555"></i><span class="abs" style="left:-12.5px;top:361.5px;width:40px;height:12px;text-align:center;transform:rotate(-90deg)">-30</span>
<i class="abs" style="left:17px;top:337px;width:7px;height:1px;background:#555"></i><span class="abs" style="left:-12.5px;top:331.5px;width:40px;height:12px;text-align:center;transform:rotate(-90deg)">-20</span>
<i class="abs" style="left:17px;top:307px;width:7px;height:1px;background:#555"></i><span class="abs" style="left:-12.5px;top:301.5px;width:40px;height:12px;text-align:center;transform:rotate(-90deg)">-10</span>
<i class="abs" style="left:17px;top:277px;width:7px;height:1px;background:#555"></i><span class="abs" style="left:-12.5px;top:271.5px;width:40px;height:12px;text-align:center;transform:rotate(-90deg)">0</span>
<i class="abs" style="left:17px;top:247px;width:7px;height:1px;background:#555"></i><span class="abs" style="left:-12.5px;top:241.5px;width:40px;height:12px;text-align:center;transform:rotate(-90deg)">10</span>
<i class="abs" style="left:17px;top:217px;width:7px;height:1px;background:#555"></i><span class="abs" style="left:-12.5px;top:211.5px;width:40px;height:12px;text-align:center;transform:rotate(-90deg)">20</span>
<i class="abs" style="left:17px;top:187px;width:7px;height:1px;background:#555"></i><span class="abs" style="left:-12.5px;top:181.5px;width:40px;height:12px;text-align:center;transform:rotate(-90deg)">30</span>
<i class="abs" style="left:17px;top:157px;width:7px;height:1px;background:#555"></i><span class="abs" style="left:-12.5px;top:151.5px;width:40px;height:12px;text-align:center;transform:rotate(-90deg)">40</span>
<i class="abs" style="left:17px;top:127px;width:7px;height:1px;background:#555"></i><span class="abs" style="left:-12.5px;top:121.5px;width:40px;height:12px;text-align:center;transform:rotate(-90deg)">50</span>
<i class="abs" style="left:17px;top:97px;width:7px;height:1px;background:#555"></i><span class="abs" style="left:-12.5px;top:91.5px;width:40px;height:12px;text-align:center;transform:rotate(-90deg)">60</span>
<i class="abs" style="left:17px;top:67px;width:7px;height:1px;background:#555"></i><span class="abs" style="left:-12.5px;top:61.5px;width:40px;height:12px;text-align:center;transform:rotate(-90deg)">70</span>
<i class="abs" style="left:17px;top:37px;width:7px;height:1px;background:#555"></i><span class="abs" style="left:-12.5px;top:31.5px;width:40px;height:12px;text-align:center;transform:rotate(-90deg)">80</span>
<i class="abs" style="left:17px;top:7px;width:7px;height:1px;background:#555"></i><span class="abs" style="left:-12.5px;top:1.5px;width:40px;height:12px;text-align:center;transform:rotate(-90deg)">90</span>
<i class="abs" style="left:17px;top:-23px;width:7px;height:1px;background:#555"></i><span class="abs" style="left:-12.5px;top:-28.5px;width:40px;height:12px;text-align:center;transform:rotate(-90deg)">100</span>
</div>
<svg class="abs" style="left:355px;top:143px" width="20" height="12" viewBox="0 0 20 12"><path d="M5 2.6 L15.6 2.6 L10.3 8.4 Z" fill="#000"/></svg>
<svg class="abs" style="left:82px;top:308px" width="12" height="20" viewBox="0 0 12 20"><path d="M3.2 4 L3.2 15 L9 9.5 Z" fill="#000"/></svg>
<div class="abs" id="cv" style="left:95px;top:155px;width:1044px;height:577px;background:#000;overflow:hidden">
<svg class="abs" style="left:0;top:0" width="1044" height="577" viewBox="95 155 1044 577">
<defs><pattern id="gd" x="244.5" y="431.5" width="30" height="30" patternUnits="userSpaceOnUse"><rect x="0.4" y="0.4" width="1.1" height="1.1" fill="#fff" fill-opacity="0.25"/></pattern></defs>
<g transform="translate(196.3,245.9) rotate(-4.55) scale(1.9237)"><g opacity="0.5"><use href="#hammer"/></g><rect x="80" y="70" width="340" height="100" clip-path="url(#hHandleClip)" fill="#8a6a50" fill-opacity="0.22"/><rect x="0" y="0" width="417" height="200.5" fill="none" stroke="#7a2c2c" stroke-opacity="0.75" stroke-width="0.45"/></g>
<rect x="95" y="155" width="1044" height="577" fill="url(#gd)"/>
<rect x="244.6" y="155" width="1.2" height="577" fill="#ffffff" fill-opacity="0.10"/>
<rect x="544.6" y="155" width="1.2" height="577" fill="#ffffff" fill-opacity="0.10"/>
<rect x="844.6" y="155" width="1.2" height="577" fill="#ffffff" fill-opacity="0.10"/>
<rect x="95" y="431.8" width="1044" height="1.2" fill="#ffffff" fill-opacity="0.10"/>
<g stroke="#c42020" stroke-opacity="0.8" stroke-width="1" fill="none"><path d="M224 432.5 L266 432.5 M245.5 412 L245.5 453"/><circle cx="245.5" cy="432.5" r="4.5"/></g>
<rect x="191.5" y="240.5" width="10" height="10" fill="#0000aa" stroke="#3c3cc4" stroke-width="0.8"/>
<rect x="221.5" y="625.5" width="10" height="10" fill="#0000aa" stroke="#3c3cc4" stroke-width="0.8"/>
</svg>
</div>
<div class="abs" style="left:1139px;top:155px;width:15px;height:577px;background:#fafafa;border-left:1px solid #e8e8e8"></div>
<div class="abs" style="left:1143px;top:329px;width:8px;height:263px;border-radius:4px;background:#7f7f7f"></div>
<div class="abs" style="left:71px;top:732px;width:1083px;height:16px;background:#fafafa;border-top:1px solid #e8e8e8"></div>
<div class="abs" style="left:71px;top:732px;width:24px;height:16px;background:#ececec"></div>
<div class="abs" style="left:278px;top:736px;width:627px;height:8px;border-radius:4px;background:#7f7f7f"></div>
<div class="abs" style="left:1086px;top:732px;width:68px;height:16px;background:#ececec;font-size:13.3px;line-height:17.5px;text-align:right;padding-right:0.5px;color:#111">10 &lt; 100</div>
<div class="abs" style="left:71px;top:748px;width:1083px;height:50px;background:#ececec"></div>
<div class="abs" style="left:72px;top:748.6px;width:1082px;height:22px;background:#fff;border-top:1.4px solid #c2c2c2;border-bottom:1px solid #d0d0d0"></div>
<div class="abs" style="left:77px;top:750px;font-size:13.4px;line-height:17px;color:#0000e0;white-space:nowrap"><i>Comando:</i> trace</div>
<div class="abs" style="left:1142.3px;top:750.5px;width:7.6px;height:16px;border-radius:4px;background:#7f7f7f"></div>
<div class="abs" style="left:73px;top:777px;font-size:13px;line-height:16px;color:#111;white-space:nowrap">Comando:</div>
<div class="abs" style="left:138px;top:776px;width:989px;height:18px;background:#fff"></div>
<div class="abs" style="left:1127px;top:772px;width:26px;height:26px;background:#f4f4f4;border:1px solid #bdbdbd"></div>
<svg class="abs" style="left:1132px;top:778px" width="16" height="14" viewBox="0 0 16 14"><rect x="1" y="1.5" width="14" height="11" fill="#fff" stroke="#111" stroke-width="1"/><rect x="1" y="1.5" width="14" height="3.5" fill="#111"/></svg>
<div class="abs" style="left:1154px;top:108px;width:300px;height:690px;background:#ececec"></div>
<div class="abs" style="left:1154px;top:108px;width:2px;height:690px;background:linear-gradient(90deg,#d8d8d8,#f4f4f4)"></div>
<div class="abs" style="left:1156px;top:156px;width:298px;height:642px;background:#fff"></div>
<div class="abs" style="left:1196px;top:110px;width:252px;text-align:center;font-size:12px;line-height:17px;letter-spacing:-0.1px;color:#222;white-space:nowrap">Lista de capas</div>
<svg class="abs" style="left:1156px;top:110px" width="36" height="16" viewBox="0 0 36 16"><circle cx="8" cy="8" r="6.9" fill="#6e6e6e"/><path d="M5.2 5.2 L10.8 10.8 M10.8 5.2 L5.2 10.8" stroke="#fff" stroke-width="1.7" stroke-linecap="round"/><circle cx="26" cy="8" r="6.9" fill="#6e6e6e"/><rect x="24.6" y="5" width="4.8" height="4" fill="none" stroke="#fff" stroke-width="1"/><rect x="22.6" y="7" width="4.8" height="4" fill="#6e6e6e" stroke="#fff" stroke-width="1"/></svg>
<div class="abs" style="left:1156px;top:130.6px;width:58.5px;height:24px;box-shadow:0 0 0 1.3px #a2a2a2;background:linear-gradient(#f3f3f3,#e6e6e6 45%,#f5f5f5)"></div>
<div class="abs" style="left:1216px;top:130.6px;width:58.5px;height:24px;box-shadow:0 0 0 1.3px #a2a2a2;background:linear-gradient(#f3f3f3,#e6e6e6 45%,#f5f5f5)"></div>
<div class="abs" style="left:1276px;top:130.6px;width:58.5px;height:24px;box-shadow:0 0 0 1.3px #a2a2a2;background:linear-gradient(#f3f3f3,#e6e6e6 45%,#f5f5f5)"></div>
<div class="abs" style="left:1336px;top:130.6px;width:58.5px;height:24px;box-shadow:0 0 0 1.3px #a2a2a2;background:linear-gradient(#f3f3f3,#e6e6e6 45%,#f5f5f5)"></div>
<div class="abs" style="left:1396px;top:130.6px;width:58.5px;height:24px;box-shadow:0 0 0 1.3px #a2a2a2;background:linear-gradient(#f3f3f3,#e6e6e6 45%,#f5f5f5)"></div>
<svg class="abs" style="left:1156px;top:126px" width="298" height="92" viewBox="1156 126 298 92">
<g transform="translate(1185,143)" opacity="1"><path d="M-7.3 0.2 Q-3.5 -5.6 0 -5.6 Q3.8 -5.6 7.3 -0.6 Q7 1.6 5.6 2 Q3 5.6 0 5.6 Q-3.6 5.6 -5.8 2.4 Q-7 2 -7.3 0.2 Z" fill="#000"/><path d="M-4.2 0.5 Q-2.2 3.5 0 3.5 Q2.4 3.5 4.2 0.5 Q2.4 -2.4 0 -2.4 Q-2.2 -2.4 -4.2 0.5 Z" fill="#fff"/><circle cx="0" cy="0.3" r="2.55" fill="#000"/><circle cx="-0.9" cy="-0.9" r="0.8" fill="#fff" opacity="0.8"/></g>
<g transform="translate(1245,143)" opacity="1"><path d="M-7.3 0.2 Q-3.5 -5.6 0 -5.6 Q3.8 -5.6 7.3 -0.6 Q7 1.6 5.6 2 Q3 5.6 0 5.6 Q-3.6 5.6 -5.8 2.4 Q-7 2 -7.3 0.2 Z" fill="#9a9a9a"/><path d="M-4.2 0.5 Q-2.2 3.5 0 3.5 Q2.4 3.5 4.2 0.5 Q2.4 -2.4 0 -2.4 Q-2.2 -2.4 -4.2 0.5 Z" fill="#fff"/><circle cx="0" cy="0.3" r="2.55" fill="#9a9a9a"/><circle cx="-0.9" cy="-0.9" r="0.8" fill="#fff" opacity="0.8"/></g>
<path d="M1299.2 141.7 L1303.5 141.7 L1303.5 137.4 L1306.1 137.4 L1306.1 141.7 L1310.4 141.7 L1310.4 144.3 L1306.1 144.3 L1306.1 148.6 L1303.5 148.6 L1303.5 144.3 L1299.2 144.3 Z" fill="#f00000" stroke="#901010" stroke-width="0.5"/>
<rect x="1359.4" y="141.6" width="11" height="2.8" fill="#f00000" stroke="#901010" stroke-width="0.5"/>
<g transform="translate(1418,149.5) rotate(-45)"><path d="M0 0 L3.4 -1.7 L3.4 1.7 Z" fill="#d8b888" stroke="#6a4a20" stroke-width="0.4"/><path d="M0 0 L1.3 -0.65 L1.3 0.65 Z" fill="#333"/><rect x="3.4" y="-1.7" width="13" height="3.4" fill="#e8a030" stroke="#9a6a18" stroke-width="0.5"/><rect x="3.4" y="-0.5" width="13" height="1" fill="#f8d070"/><rect x="16.4" y="-1.7" width="2.4" height="3.4" rx="0.8" fill="#e03030" stroke="#902020" stroke-width="0.4"/></g>
<rect x="1156" y="197.2" width="298" height="19.6" fill="#0447d9"/>
<rect x="1161.5" y="163.5" width="15" height="8" fill="#fff" stroke="#000" stroke-width="1"/>
<rect x="1161" y="183" width="16" height="9" fill="#000"/>
<rect x="1161.5" y="203.3" width="15" height="8.2" fill="#e8384f" stroke="#444" stroke-width="0.8"/>
<g transform="translate(1422.8,167)" opacity="1"><path d="M-7.3 0.2 Q-3.5 -5.6 0 -5.6 Q3.8 -5.6 7.3 -0.6 Q7 1.6 5.6 2 Q3 5.6 0 5.6 Q-3.6 5.6 -5.8 2.4 Q-7 2 -7.3 0.2 Z" fill="#000"/><path d="M-4.2 0.5 Q-2.2 3.5 0 3.5 Q2.4 3.5 4.2 0.5 Q2.4 -2.4 0 -2.4 Q-2.2 -2.4 -4.2 0.5 Z" fill="#fff"/><circle cx="0" cy="0.3" r="2.55" fill="#000"/><circle cx="-0.9" cy="-0.9" r="0.8" fill="#fff" opacity="0.8"/></g>
<g transform="translate(1422.8,187)" opacity="1"><path d="M-7.3 0.2 Q-3.5 -5.6 0 -5.6 Q3.8 -5.6 7.3 -0.6 Q7 1.6 5.6 2 Q3 5.6 0 5.6 Q-3.6 5.6 -5.8 2.4 Q-7 2 -7.3 0.2 Z" fill="#000"/><path d="M-4.2 0.5 Q-2.2 3.5 0 3.5 Q2.4 3.5 4.2 0.5 Q2.4 -2.4 0 -2.4 Q-2.2 -2.4 -4.2 0.5 Z" fill="#fff"/><circle cx="0" cy="0.3" r="2.55" fill="#000"/><circle cx="-0.9" cy="-0.9" r="0.8" fill="#fff" opacity="0.8"/></g>
<g transform="translate(1422.8,207)" opacity="1"><path d="M-7.3 0.2 Q-3.5 -5.6 0 -5.6 Q3.8 -5.6 7.3 -0.6 Q7 1.6 5.6 2 Q3 5.6 0 5.6 Q-3.6 5.6 -5.8 2.4 Q-7 2 -7.3 0.2 Z" fill="#000"/><path d="M-4.2 0.5 Q-2.2 3.5 0 3.5 Q2.4 3.5 4.2 0.5 Q2.4 -2.4 0 -2.4 Q-2.2 -2.4 -4.2 0.5 Z" fill="#0447d9"/><circle cx="0" cy="0.3" r="2.55" fill="#000"/><circle cx="-0.9" cy="-0.9" r="0.8" fill="#0447d9" opacity="0.8"/></g>
<g transform="translate(1440.2,160.2)"><path d="M1.6 6.2 L1.6 4.4 Q1.6 0.8 4.85 0.8 Q8.1 0.8 8.1 4.4 L8.1 6.2" fill="none" stroke="#c4c4c4" stroke-width="1.5"/><rect x="0" y="5.8" width="9.7" height="7.8" fill="#b4b4b4"/></g>
<g transform="translate(1440.2,180.2)"><path d="M1.6 6.2 L1.6 4.4 Q1.6 0.8 4.85 0.8 Q8.1 0.8 8.1 4.4 L8.1 6.2" fill="none" stroke="#c4c4c4" stroke-width="1.5"/><rect x="0" y="5.8" width="9.7" height="7.8" fill="#b4b4b4"/></g>
<g transform="translate(1440.2,200.2)"><path d="M1.6 6.2 L1.6 4.4 Q1.6 0.8 4.85 0.8 Q8.1 0.8 8.1 4.4 L8.1 6.2" fill="none" stroke="#c4c4c4" stroke-width="1.5"/><rect x="0" y="5.8" width="9.7" height="7.8" fill="#b0b0b0"/></g>
<g transform="translate(1394.8,213.6) rotate(-45)"><path d="M0 0 L3.4 -1.7 L3.4 1.7 Z" fill="#d8b888" stroke="#6a4a20" stroke-width="0.4"/><path d="M0 0 L1.3 -0.65 L1.3 0.65 Z" fill="#333"/><rect x="3.4" y="-1.7" width="11.5" height="3.4" fill="#e8a030" stroke="#9a6a18" stroke-width="0.5"/><rect x="3.4" y="-0.5" width="11.5" height="1" fill="#f8d070"/><rect x="14.9" y="-1.7" width="2.4" height="3.4" rx="0.8" fill="#e03030" stroke="#902020" stroke-width="0.4"/></g>
</svg>
<div class="abs" style="left:1183px;top:159px;font-size:13px;line-height:16px;color:#000;white-space:nowrap">0</div>
<div class="abs" style="left:1183px;top:179px;font-size:13px;line-height:16px;color:#000;white-space:nowrap">Imagen</div>
<div class="abs" style="left:1183px;top:199px;font-size:13px;line-height:16px;color:#fff;white-space:nowrap">Trazado</div>
<div class="abs" style="left:1454px;top:108px;width:46px;height:690px;background:linear-gradient(90deg,#efefef 0%,#e6e6e6 20%,#c9c9c9 100%)"></div>
<div class="hgrip" style="left:1463px;top:116px;width:26px"></div>
<div class="abs" style="left:1454px;top:108px;width:1px;height:690px;background:#c6c6c6"></div>
<div class="abs" style="left:1458px;top:261px;width:42px;height:1px;background:repeating-linear-gradient(90deg,#3a3a3a 0,#3a3a3a 1px,transparent 1px,transparent 3px)"></div>
<div class="abs" style="left:1458px;top:409px;width:42px;height:1px;background:repeating-linear-gradient(90deg,#3a3a3a 0,#3a3a3a 1px,transparent 1px,transparent 3px)"></div>
<div class="abs" style="left:1458px;top:512px;width:42px;height:1px;background:repeating-linear-gradient(90deg,#3a3a3a 0,#3a3a3a 1px,transparent 1px,transparent 3px)"></div>
<div class="abs" style="left:1456px;top:120.5px;width:43px;height:42px;background:#b6b6b6;border-radius:5px"></div>
<div class="abs" style="left:1456px;top:417.5px;width:43px;height:42px;background:#b6b6b6;border-radius:5px"></div>
<svg class="abs" style="left:1463px;top:127px" width="28" height="28" viewBox="0 0 28 28"><rect x="0.5" y="0.5" width="27" height="27" fill="#fff" stroke="#222" stroke-width="0.9"/><rect x="0.5" y="0.5" width="27" height="4.4" fill="#000"/><rect x="1.2" y="1" width="3.2" height="3.2" fill="#fff"/><path d="M7.5 14 L16.5 10 L16.5 20 L7.5 24 Z" fill="#d8d8d8" stroke="#555" stroke-width="0.7"/><path d="M9.5 13 L18.5 9 L18.5 19 L9.5 23 Z" fill="#e4e4e4" stroke="#555" stroke-width="0.7"/><path d="M11.5 12 L20.5 8 L20.5 18 L11.5 22 Z" fill="#fff" stroke="#555" stroke-width="0.7"/><path d="M13.5 19 L18.5 11 L18.5 17 Z" fill="none" stroke="#e03030" stroke-width="0.8"/></svg>
<svg class="abs" style="left:1463px;top:174px" width="28" height="28" viewBox="0 0 28 28"><rect x="0.5" y="0.5" width="27" height="27" fill="#fff" stroke="#222" stroke-width="0.9"/><rect x="0.5" y="0.5" width="27" height="4.4" fill="#000"/><rect x="1.2" y="1" width="3.2" height="3.2" fill="#fff"/><rect x="7.5" y="10.5" width="10.5" height="8" fill="#fdf0c0" stroke="#555" stroke-width="0.8"/><circle cx="16.5" cy="17.5" r="4.6" fill="#fdf0c0" stroke="#555" stroke-width="0.8"/><path d="M12 17.5 L18 17.5 L18 13.2" fill="none" stroke="#555" stroke-width="0.7"/></svg>
<svg class="abs" style="left:1463px;top:220px" width="28" height="28" viewBox="0 0 28 28"><rect x="0.5" y="0.5" width="27" height="27" fill="#fff" stroke="#222" stroke-width="0.9"/><rect x="0.5" y="0.5" width="27" height="4.4" fill="#000"/><rect x="1.2" y="1" width="3.2" height="3.2" fill="#fff"/><rect x="5.5" y="10.5" width="17" height="11" rx="2" fill="#f6f6f6" stroke="#b8c8e4" stroke-width="1"/></svg>
<svg class="abs" style="left:1463px;top:276.3px" width="28" height="28" viewBox="0 0 28 28"><rect x="0.5" y="0.5" width="27" height="27" fill="#fff" stroke="#222" stroke-width="0.9"/><rect x="0.5" y="0.5" width="27" height="4.4" fill="#000"/><rect x="1.2" y="1" width="3.2" height="3.2" fill="#fff"/><g fill="#111"><rect x="3" y="8.8" width="4" height="3.4"/><rect x="3" y="14.3" width="4" height="3.4"/><rect x="3" y="19.8" width="4" height="3.4"/></g><g fill="#fff" stroke="#333" stroke-width="0.8"><rect x="10.5" y="9" width="14" height="3"/><rect x="10.5" y="14.5" width="14" height="3"/><rect x="10.5" y="20" width="14" height="3"/></g></svg>
<svg class="abs" style="left:1463px;top:322.3px" width="28" height="28" viewBox="0 0 28 28"><rect x="0.5" y="0.5" width="27" height="27" fill="#fff" stroke="#222" stroke-width="0.9"/><rect x="0.5" y="0.5" width="27" height="4.4" fill="#000"/><rect x="1.2" y="1" width="3.2" height="3.2" fill="#fff"/><path d="M6.5 9 L21.5 9 L15.8 16 L15.8 23.5 L12.2 21.5 L12.2 16 Z" fill="#8a8a8a" stroke="#444" stroke-width="0.8"/><ellipse cx="14" cy="9" rx="7.5" ry="1.6" fill="#c8c8c8" stroke="#444" stroke-width="0.7"/></svg>
<svg class="abs" style="left:1463px;top:368.3px" width="28" height="28" viewBox="0 0 28 28"><rect x="0.5" y="0.5" width="27" height="27" fill="#fff" stroke="#222" stroke-width="0.9"/><rect x="0.5" y="0.5" width="27" height="4.4" fill="#000"/><rect x="1.2" y="1" width="3.2" height="3.2" fill="#fff"/><path d="M3 16 L25 16" stroke="#f08080" stroke-width="0.8" stroke-dasharray="2 1"/><path d="M7 10.5 L11 12.5 L11 19.5 L7 21.5 Z" fill="#e8e8e8" stroke="#333" stroke-width="0.8"/><rect x="11" y="12.5" width="9.5" height="7" fill="#666" stroke="#333" stroke-width="0.6"/><path d="M13 12.5 L13 19.5 M15 12.5 L15 19.5 M17 12.5 L17 19.5 M19 12.5 L19 19.5" stroke="#aaa" stroke-width="0.6"/></svg>
<svg class="abs" style="left:1463px;top:424px" width="28" height="28" viewBox="0 0 28 28"><rect x="0.5" y="0.5" width="27" height="27" fill="#fff" stroke="#222" stroke-width="0.9"/><rect x="0.5" y="0.5" width="27" height="4.4" fill="#000"/><rect x="1.2" y="1" width="3.2" height="3.2" fill="#fff"/><text x="3" y="10.6" font-family="Liberation Sans, sans-serif" font-size="3.2" fill="#777">Comando: línea</text><text x="3" y="14.4" font-family="Liberation Sans, sans-serif" font-size="3.2" fill="#777">Punto inicial: 0,0</text><text x="3" y="18.2" font-family="Liberation Sans, sans-serif" font-size="3.2" fill="#777">Coordenada: 50,40</text><text x="3" y="22" font-family="Liberation Sans, sans-serif" font-size="3.2" fill="#777">Coordenada: 100,90</text><path d="M0.5 23.3 L27.5 23.3" stroke="#333" stroke-width="0.6"/><text x="2.5" y="27" font-family="Liberation Sans, sans-serif" font-size="3.4" fill="#111">C      command</text></svg>
<svg class="abs" style="left:1463px;top:471px" width="28" height="28" viewBox="0 0 28 28"><rect x="0.5" y="0.5" width="27" height="27" fill="#fff" stroke="#222" stroke-width="0.9"/><rect x="0.5" y="0.5" width="27" height="4.4" fill="#000"/><rect x="1.2" y="1" width="3.2" height="3.2" fill="#fff"/><rect x="8" y="10" width="13" height="14.5" rx="0.8" fill="#c08a40" stroke="#8a5a18" stroke-width="0.7"/><rect x="9.8" y="12" width="9.4" height="11" fill="#f4f4f4" stroke="#bbb" stroke-width="0.4"/><path d="M11 14.5 L18 14.5 M11 16.5 L18 16.5 M11 18.5 L18 18.5 M11 20.5 L15 20.5" stroke="#c8c8c8" stroke-width="0.7"/><rect x="11.5" y="8.8" width="6" height="3" rx="0.8" fill="#9a9a94" stroke="#666" stroke-width="0.5"/><path d="M16.5 23 L19.2 20.3 L19.2 23 Z" fill="#999"/></svg>
<div class="abs" style="left:1464.2px;top:526px;width:40px;-webkit-text-stroke:0.4px #222;text-align:left;font-size:22.8px;line-height:30px;color:#2a2a2a;font-family:'DejaVu Sans Light','DejaVu Sans',sans-serif;font-weight:200;transform:scaleX(0.85);transform-origin:0 0;white-space:nowrap">3D</div>
<div class="abs" style="left:0;top:798px;width:1500px;height:46px;background:#dcdcdc;border-top:1px solid #e6e6e6"></div>
<div class="abs" style="left:2px;top:807px;font-size:10px;line-height:12px;color:#111;white-space:nowrap;letter-spacing:0.25px">40,38.3333</div>
<div class="abs" style="left:2px;top:827px;font-size:10px;line-height:12px;color:#111;white-space:nowrap;letter-spacing:0.25px">@40,38.3333</div>
<div class="abs" style="left:253px;top:803px;width:1px;height:38px;background:#8e8e8e"></div><div class="abs" style="left:254px;top:803px;width:1px;height:38px;background:#f4f4f4"></div>
<div class="abs" style="left:256px;top:807px;font-size:10px;line-height:12px;color:#111;white-space:nowrap;letter-spacing:0.25px">55.4026&lt;44°</div>
<div class="abs" style="left:256px;top:827px;font-size:10px;line-height:12px;color:#111;white-space:nowrap;letter-spacing:0.25px">@55.4026&lt;44°</div>
<div class="abs" style="left:506px;top:819px;width:6px;height:6px;border-radius:3px;background:#cbcbcb"></div>
<div class="abs" style="left:940px;top:819px;width:6px;height:6px;border-radius:3px;background:#cbcbcb"></div>
<div class="abs" style="left:1269px;top:819px;width:6px;height:6px;border-radius:3px;background:#cbcbcb"></div>
<div class="abs" style="left:498px;top:811px;width:201px;text-align:right;font-size:10px;line-height:12px;color:#111;white-space:nowrap;letter-spacing:0.25px;letter-spacing:0.08px">Seleccionar entidad o región</div>
<div class="abs" style="left:498px;top:822px;width:201px;text-align:right;font-size:10px;line-height:12px;color:#111;white-space:nowrap;letter-spacing:0.25px;letter-spacing:0.08px">Mover entidad o referencia</div>
<svg class="abs" style="left:715px;top:803px" width="24" height="36" viewBox="0 0 24 36"><path d="M3 11 Q3 3.5 11.5 3.5 Q20 3.5 20 11 L20 24 Q20 32.5 11.5 32.5 Q3 32.5 3 24 Z" fill="#fdfdfd" stroke="#222" stroke-width="0.9"/><path d="M3 16.5 L20 16.5" stroke="#222" stroke-width="0.8"/><path d="M11.5 3.5 L11.5 6.5 M11.5 13 L11.5 16.5" stroke="#222" stroke-width="0.7"/><rect x="9.8" y="6.5" width="3.4" height="6.5" rx="1.7" fill="#fff" stroke="#222" stroke-width="0.8"/></svg>
<div class="abs" style="left:949px;top:811px;font-size:10px;line-height:12px;color:#111;white-space:nowrap;letter-spacing:0.25px;letter-spacing:0.05px">Las entidades seleccionadas:</div>
<div class="abs" style="left:949px;top:822px;font-size:10px;line-height:12px;color:#111;white-space:nowrap;letter-spacing:0.25px;letter-spacing:0.05px">1 Imagen en capa "Imagen".</div>
<div class="abs" id="dlg" style="left:399px;top:157px;width:702px;height:529px;background:#ececec;border:3px solid #a9a9a9;border-radius:3px;box-shadow:inset 0 0 0 0.5px #c8c8c8"></div>
<div class="abs" style="left:428.5px;top:184px;font-size:11px;line-height:13px;letter-spacing:0.36px;color:#111;white-space:nowrap">Preprocesamiento</div>
<div class="abs" style="left:637.3px;top:184px;font-size:11px;line-height:13px;letter-spacing:0.28px;color:#111;white-space:nowrap">Vista previa</div>
<div class="abs" style="left:421.4px;top:196.3px;width:192.2px;height:199px;background:#e5e5e5;border:1px solid #dfdfdf;border-radius:5px"></div>
<div class="abs" style="left:630.2px;top:196.3px;width:448.4px;height:426.2px;background:#e5e5e5;border:1px solid #dfdfdf;border-radius:5px"></div>
<!-- checkbox -->
<div class="abs" style="left:436.6px;top:212.3px;width:13px;height:13.2px;background:#fff;border:1px solid #d2d2d2;border-radius:3px;box-shadow:0 0.5px 1px rgba(0,0,0,0.12)"></div>
<div class="abs" style="left:454px;top:212px;font-size:13.3px;line-height:16px;letter-spacing:0.05px;color:#1a1a1a;white-space:nowrap">Monocromo</div>
<!-- radio 1 -->
<div class="abs" style="left:456.2px;top:240.5px;width:13.2px;height:13.2px;border-radius:50%;background:#f4f4f4;border:1px solid #dedede"></div>
<div class="abs" style="left:460.2px;top:244.5px;width:5.2px;height:5.2px;border-radius:50%;background:#bcbcbc"></div>
<div class="abs" style="left:475px;top:240px;font-size:13.3px;line-height:16px;letter-spacing:0.07px;color:#b2b2b2;white-space:nowrap">Umbral Alfa:</div>
<div class="abs" style="left:458px;top:271.6px;width:70px;height:3.8px;border-radius:2px;background:#dcdcdc"></div>
<div class="abs" style="left:513.7px;top:263.3px;width:20.4px;height:20.4px;border-radius:50%;background:#808080"></div>
<div class="abs" style="left:549.8px;top:266px;width:48.4px;height:19.4px;background:#fff;border-bottom:1px solid #c8c8c8;box-shadow:0 0 0 0.5px #dcdcdc"></div>
<div class="abs" style="left:551px;top:268.5px;font-size:13.3px;line-height:16px;letter-spacing:0.2px;color:#000;white-space:nowrap">250</div>
<!-- radio 2 -->
<div class="abs" style="left:456.4px;top:299.4px;width:13.2px;height:13.2px;border-radius:50%;background:#f2f2f2;border:1px solid #e0e0e0"></div>
<div class="abs" style="left:475px;top:299px;font-size:13.3px;line-height:16px;letter-spacing:0.11px;color:#b2b2b2;white-space:nowrap">Umbral de brillo:</div>
<div class="abs" style="left:458px;top:330.8px;width:70px;height:3.8px;border-radius:2px;background:#dcdcdc"></div>
<div class="abs" style="left:513.7px;top:322.5px;width:20.4px;height:20.4px;border-radius:50%;background:#808080"></div>
<div class="abs" style="left:549.8px;top:325px;width:48.4px;height:19.4px;background:#fff;border-bottom:1px solid #c8c8c8;box-shadow:0 0 0 0.5px #dcdcdc"></div>
<div class="abs" style="left:551px;top:327.5px;font-size:13.3px;line-height:16px;letter-spacing:0.2px;color:#000;white-space:nowrap">250</div>
<!-- colors -->
<div class="abs" style="left:436px;top:364px;font-size:13.3px;line-height:16px;letter-spacing:0px;color:#111;white-space:nowrap">Número de colores:</div>
<div class="abs" style="left:562.6px;top:362.6px;width:20.6px;height:17px;background:#fff;border-bottom:1px solid #cdcdcd;box-shadow:0 0 0 0.5px #dcdcdc"></div>
<div class="abs" style="left:564px;top:363.5px;font-size:13.3px;line-height:16px;color:#000;white-space:nowrap">16</div>
<div class="abs" style="left:586px;top:361.3px;width:12px;height:19.4px;background:#fff;border-radius:4px;box-shadow:0 0.5px 1.5px rgba(0,0,0,0.3),0 0 0 0.5px rgba(0,0,0,0.08)"></div>
<svg class="abs" style="left:586px;top:361px" width="12" height="20" viewBox="0 0 12 20"><path d="M2.8 7.3 L6 4.2 L9.2 7.3 M2.8 13 L6 16.1 L9.2 13" fill="none" stroke="#222" stroke-width="1.5" stroke-linecap="round" stroke-linejoin="round"/></svg>
<!-- update button -->
<div class="abs" style="left:645.2px;top:212px;width:81.7px;height:21.7px;border:1px solid #ababab;background:linear-gradient(#fdfdfd,#eeeeee);font-size:11px;line-height:20px;letter-spacing:0.05px;text-align:center;color:#222;white-space:nowrap">Actualización</div>
<!-- preview frame -->
<div class="abs" style="left:645.2px;top:244px;width:418.6px;height:363.6px;border:1px solid #bcbcbc;background:#e5e5e5"></div>
<svg class="abs" style="left:646px;top:326px" width="417" height="201" viewBox="0 0 417 201"><use href="#hammer"/></svg>
<!-- cursor halo -->
<svg class="abs" style="left:700px;top:372px" width="100" height="100" viewBox="0 0 100 100">
<circle cx="50" cy="49" r="36.6" fill="#8aa0c0" fill-opacity="0.03" stroke="#93a9c4" stroke-opacity="0.48" stroke-width="4.2"/>
<circle cx="50" cy="49" r="39" fill="none" stroke="#b8c6d8" stroke-opacity="0.55" stroke-width="0.9"/>
<circle cx="50" cy="49" r="34.2" fill="none" stroke="#b8c6d8" stroke-opacity="0.5" stroke-width="0.9"/>
<path d="M50.1 48.6 L50.1 71.8 L55.4 66.4 L60.1 76.3 L64.4 74.4 L59.8 64.8 L66.2 64 Z" fill="none" stroke="#fff" stroke-opacity="0.9" stroke-width="3.2" stroke-linejoin="round"/><path d="M50.1 48.6 L50.1 71.8 L55.4 66.4 L60.1 76.3 L64.4 74.4 L59.8 64.8 L66.2 64 Z" fill="#fff" stroke="#000" stroke-width="1.4" stroke-linejoin="miter"/>
</svg>
<!-- buttons -->
<div class="abs" style="left:905.8px;top:644.7px;width:81.3px;height:20.6px;border-radius:5.5px;background:#fff;box-shadow:0 0.5px 1.5px rgba(0,0,0,0.28),0 0 0 0.5px rgba(0,0,0,0.08);font-size:13px;line-height:20px;letter-spacing:0.05px;text-align:center;color:#111">Cancelar</div>
<div class="abs" style="left:1002.9px;top:644.7px;width:75.1px;height:20.6px;border-radius:5.5px;background:linear-gradient(#2d90fe,#0a6ff2);box-shadow:0 0.5px 1.5px rgba(0,0,0,0.25);font-size:13px;line-height:20px;letter-spacing:0.28px;text-align:center;color:#fff">Aceptar</div>
</div>
</body>
</html>
